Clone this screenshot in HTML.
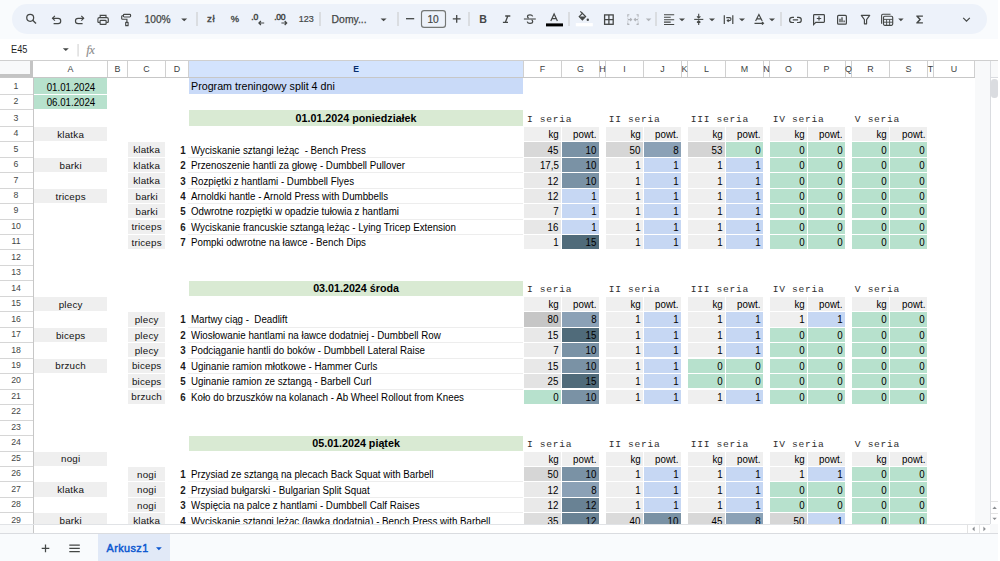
<!DOCTYPE html>
<html><head><meta charset="utf-8"><style>
html,body{margin:0;padding:0;width:1000px;height:561px;overflow:hidden;background:#f9fbfd;font-family:"Liberation Sans",sans-serif}
#root{position:relative;width:1000px;height:561px;overflow:hidden}
#root div{position:absolute}
.ab{position:absolute}
svg{position:absolute;overflow:visible}
</style></head><body><div id="root">
<!-- toolbar -->
<div style="left:12px;top:4.2px;width:974.5px;height:29.4px;border-radius:15px;background:#edf2fa"></div>
<svg style="left:0;top:0" width="1000" height="40" viewBox="0 0 1000 40">
<g fill="none" stroke="#444746" stroke-width="1.15" stroke-linecap="butt" stroke-linejoin="miter">
<!-- search -->
<circle cx="30.2" cy="17.8" r="3.45" stroke-width="1.25"/>
<path d="M32.7 20.3 L36 23.6" stroke-width="1.35"/>
<!-- undo -->
<path d="M54.9 15.9 L52.5 18.3 L54.9 20.7"/>
<path d="M52.6 18.3 H58.1 A2.65 2.65 0 0 1 58.1 23.6 H53.6"/>
<!-- redo -->
<path d="M81.3 15.9 L83.7 18.3 L81.3 20.7"/>
<path d="M83.6 18.3 H78.1 A2.65 2.65 0 0 0 78.1 23.6 H82.6"/>
<!-- print -->
<path d="M100.2 17.4 V15.3 H106 V17.4"/>
<path d="M99.9 22.4 H98.6 Q97.9 22.4 97.9 21.7 V19 Q97.9 17.6 99.3 17.6 H106.9 Q108.3 17.6 108.3 19 V21.7 Q108.3 22.4 107.6 22.4 H106.3"/>
<rect x="100.1" y="20.4" width="6" height="3.9" rx="0.6"/>
<!-- paint format -->
<rect x="123.4" y="14.4" width="7.2" height="2.6" rx="0.9"/>
<path d="M123.4 15.7 H122.4 Q121.7 15.7 121.7 16.4 V18.5 Q121.7 19.2 122.4 19.2 H126.9 V22.2"/>
<rect x="125.7" y="22.3" width="2.4" height="3.4" rx="0.3"/>
<!-- separators -->
</g>
<g fill="#c7c7c7">
<rect x="196.5" y="12" width="1" height="14"/>
<rect x="319.5" y="12" width="1" height="14"/>
<rect x="397.5" y="12" width="1" height="14"/>
<rect x="468.5" y="12" width="1" height="14"/>
<rect x="568.5" y="12" width="1" height="14"/>
<rect x="655.5" y="12" width="1" height="14"/>
<rect x="780.5" y="12" width="1" height="14"/>
</g>
<g fill="#444746">
<!-- dropdown triangles -->
<path d="M181.2 18.4 H187.2 L184.2 21.3 Z"/>
<path d="M380.6 18.4 H386.6 L383.6 21.3 Z"/>
<path d="M679 18.4 H685 L682 21.3 Z"/>
<path d="M709 18.4 H715 L712 21.3 Z"/>
<path d="M739 18.4 H745 L742 21.3 Z"/>
<path d="M769 18.4 H775 L772 21.3 Z"/>
<path d="M898.2 18.4 H903.6 L900.9 21.2 Z"/>
<path d="M645.8 18.6 H651.4 L648.6 21.3 Z" fill="#b1b4b9"/>
</g>
<!-- text in toolbar -->
<g font-family="'Liberation Sans', sans-serif" fill="#444746">
<text x="144.6" y="23.2" font-size="10.2" stroke="#444746" stroke-width="0.25">100%</text>
<text x="206.9" y="22" font-size="9.8" stroke="#444746" stroke-width="0.35" letter-spacing="0.6">zł</text>
<text x="230.8" y="21.8" font-size="9.4" stroke="#444746" stroke-width="0.35">%</text>
<text x="251.2" y="19.8" font-size="8.6" stroke="#444746" stroke-width="0.45">.0</text>
<text x="274.2" y="19.8" font-size="8.6" stroke="#444746" stroke-width="0.45" letter-spacing="-0.3">.00</text>
<text x="298.8" y="21.7" font-size="9.0" stroke="#444746" stroke-width="0.2">123</text>
<text x="331.6" y="23.2" font-size="10.4" stroke="#444746" stroke-width="0.25">Domy...</text>
<text x="427.4" y="22.7" font-size="10.2" stroke="#444746" stroke-width="0.2">10</text>
<text x="479.3" y="22.7" font-size="10.6" font-weight="700">B</text>
</g>
<g fill="none" stroke="#444746" stroke-width="1.1">
<!-- decimal arrows -->
<path d="M264.2 23 H258.9 M260.9 21 L258.9 23 L260.9 25" stroke-width="1.2"/>
<path d="M281.4 23 H286.7 M284.7 21 L286.7 23 L284.7 25" stroke-width="1.2"/>
<!-- minus / plus -->
<path d="M406 18.7 H414.2" stroke-width="1.3"/>
<path d="M452.8 18.9 H460.6 M456.7 15 V22.8" stroke-width="1.3"/>
<!-- font size box -->
<rect x="421.5" y="10.6" width="24" height="16.8" rx="2.6" stroke="#747775" stroke-width="1.15"/>
<!-- italic -->
<path d="M505.2 16 H510.3 M502.9 22.3 H508 M507.8 16 L505.4 22.3" stroke-width="1.3"/>
<!-- strikethrough -->
<path d="M523.9 19 H535.8" stroke-width="1.1"/>
<path d="M532.7 16.4 Q532.2 14.8 530 14.8 Q527.5 14.8 527.5 16.6 Q527.5 17.5 528.6 18.3" stroke-width="1.2"/>
<path d="M531.6 19.8 Q532.7 20.5 532.7 21.5 Q532.7 23.4 530 23.4 Q527.6 23.4 527.2 21.6" stroke-width="1.2"/>
<!-- text color A -->
<path d="M550.8 21 L554.1 13.9 L557.4 21 M551.9 18.7 H556.3" stroke-width="1.2"/>
<!-- borders -->
<rect x="604.6" y="14.9" width="8.6" height="9.4" stroke-width="1.3"/>
<path d="M608.9 14.9 V24.3 M604.6 19.6 H613.2" stroke-width="1.3"/>
<!-- merge (disabled) -->
<g stroke="#b1b4b9" stroke-width="1.1">
<path d="M629.4 14.8 H627.8 V16.7 M627.8 22.5 V24.4 H629.4 M636.5 14.8 H638.1 V16.7 M638.1 22.5 V24.4 H636.5"/>
<path d="M627.8 19.6 H631.6 M630.2 18.2 L631.6 19.6 L630.2 21 M638.1 19.6 H634.3 M635.7 18.2 L634.3 19.6 L635.7 21"/>
<path d="M627.8 17.8 V18.4 M627.8 20.8 V21.4 M638.1 17.8 V18.4 M638.1 20.8 V21.4"/>
</g>
<!-- align left -->
<path d="M664 14.8 H674.2 M664 17.3 H670.7 M664 19.7 H674.2 M664 22.1 H670.7 M664 24.5 H674.2" stroke-width="1.05"/>
<!-- vertical align -->
<path d="M694.2 19.4 H703.3" stroke-width="1.1"/>
<path d="M698.7 13.8 V17.8 M697 16.3 L698.7 18 L700.4 16.3" stroke-width="1.1"/>
<path d="M698.7 25 V21 M697 22.5 L698.7 20.8 L700.4 22.5" stroke-width="1.1"/>
<!-- wrap -->
<path d="M724.3 15.2 V23.9 M732.8 15.2 V23.9" stroke-width="1.2"/>
<path d="M726.3 17.6 H729.5 Q731 17.6 731 19.1 Q731 20.6 729.5 20.6 H727.3 M728.6 19.3 L727.2 20.6 L728.6 21.9" stroke-width="1.05"/>
<!-- text rotation A -->
<path d="M755.6 21 L758.9 14.6 L762.2 21 M756.7 18.8 H761.1" stroke-width="1.15"/>
<path d="M754.5 23.3 H763.3 M762 22 L763.5 23.3 L762 24.6" stroke-width="1.15"/>
<!-- link -->
<path d="M794 17.3 H792.4 Q789.6 17.3 789.6 19.9 Q789.6 22.5 792.4 22.5 H794 M797 17.3 H798.6 Q801.3 17.3 801.3 19.9 Q801.3 22.5 798.6 22.5 H797 M792.8 19.9 H798.1" stroke-width="1.2"/>
<!-- comment -->
<path d="M813.6 24.6 V15.4 Q813.6 14.6 814.4 14.6 H823.6 Q824.4 14.6 824.4 15.4 V21.6 Q824.4 22.4 823.6 22.4 H815.8 Z" stroke-width="1.2"/>
<path d="M819 16.3 V20.6 M816.8 18.5 H821.2" stroke-width="1.2"/>
<!-- chart -->
<rect x="837.6" y="15.4" width="8.8" height="8.8" rx="1" stroke-width="1.2"/>
<path d="M840 18.8 V22.3 M842 17.2 V22.3 M844.1 20.4 V22.3" stroke-width="1.3"/>
<!-- filter -->
<path d="M861.3 15.4 H869.7 L866.6 19.6 V23.8 H864.4 V19.6 Z" stroke-width="1.15" stroke-linejoin="round"/>
<!-- filter views -->
<path d="M881.6 23.7 V15.5 Q881.6 14.3 882.8 14.3 H890.5" stroke-width="1.1"/>
<rect x="883.5" y="16.2" width="9.2" height="9.1" rx="1.2" stroke-width="1.15"/>
<path d="M883.5 19.4 H892.7 M883.5 22.2 H892.7 M886.6 19.4 V25.3 M889.6 19.4 V25.3" stroke-width="0.9"/>
<!-- chevron -->
<path d="M963.2 17.8 L966.5 21.1 L969.8 17.8" stroke-width="1.2"/>
</g>
<g fill="#444746">
<!-- sigma -->
<path d="M916.3 15.4 H922.9 V16.8 H918.6 L921.1 19.5 L918.6 22.2 H922.9 V23.6 H916.3 V22.5 L919.1 19.5 L916.3 16.5 Z"/>
<!-- paint bucket -->
<path d="M579.2 16.6 L582.4 13.4 L585.6 16.6 L582.4 19.8 Z" fill="none" stroke="#444746" stroke-width="1.2"/>
<path d="M579.2 16.6 H585.6 L582.4 19.8 Z"/>
<path d="M580.3 11.3 L582.7 13.7" fill="none" stroke="#444746" stroke-width="1.2"/>
<circle cx="587.8" cy="19.7" r="1.2"/>
<!-- text color bar -->
<rect x="546" y="23.4" width="17" height="3" fill="#000"/>
</g>
<rect x="575.8" y="23.1" width="17" height="3.2" fill="#fff"/>
</svg>

<!-- formula bar -->
<div style="left:0;top:39.4px;width:1000px;height:21px;background:#fff"></div>
<div style="left:10.5px;top:42.6px;font:400 10.4px/13px 'Liberation Sans',sans-serif;color:#1f1f1f;transform:scaleX(0.885);transform-origin:left 50%">E45</div>
<svg style="left:0;top:39" width="120" height="21" viewBox="0 39 120 21"><path d="M62.8 48.2 H68.8 L65.8 51.1 Z" fill="#444746"/><rect x="77.6" y="44" width="0.9" height="12.5" fill="#c7c7c7"/>
<text x="86.3" y="54.2" font-family="'Liberation Serif', serif" font-style="italic" font-size="12.6" fill="#8d8d8d" stroke="#8d8d8d" stroke-width="0.15" letter-spacing="-0.5">fx</text></svg>

<!-- grid area -->
<div style="left:0;top:60.2px;width:998px;height:464.2px;background:#fff"></div>
<div style="left:0;top:59.9px;width:998px;height:0.8px;background:#cfcfcf"></div>
<div style="left:33.70px;top:60.60px;width:73.60px;height:16.70px;background:#fff;"></div><div style="left:107.30px;top:60.60px;width:20.20px;height:16.70px;background:#fff;"></div><div style="left:127.50px;top:60.60px;width:38.00px;height:16.70px;background:#fff;"></div><div style="left:165.50px;top:60.60px;width:23.00px;height:16.70px;background:#fff;"></div><div style="left:188.50px;top:60.60px;width:335.10px;height:16.70px;background:#d3e3fd;"></div><div style="left:523.60px;top:60.60px;width:37.80px;height:16.70px;background:#fff;"></div><div style="left:561.40px;top:60.60px;width:38.00px;height:16.70px;background:#fff;"></div><div style="left:599.40px;top:60.60px;width:6.00px;height:16.70px;background:#fff;"></div><div style="left:605.40px;top:60.60px;width:38.00px;height:16.70px;background:#fff;"></div><div style="left:643.40px;top:60.60px;width:38.00px;height:16.70px;background:#fff;"></div><div style="left:681.40px;top:60.60px;width:6.00px;height:16.70px;background:#fff;"></div><div style="left:687.40px;top:60.60px;width:38.00px;height:16.70px;background:#fff;"></div><div style="left:725.40px;top:60.60px;width:38.00px;height:16.70px;background:#fff;"></div><div style="left:763.40px;top:60.60px;width:6.00px;height:16.70px;background:#fff;"></div><div style="left:769.40px;top:60.60px;width:38.00px;height:16.70px;background:#fff;"></div><div style="left:807.40px;top:60.60px;width:38.00px;height:16.70px;background:#fff;"></div><div style="left:845.40px;top:60.60px;width:6.00px;height:16.70px;background:#fff;"></div><div style="left:851.40px;top:60.60px;width:38.00px;height:16.70px;background:#fff;"></div><div style="left:889.40px;top:60.60px;width:38.10px;height:16.70px;background:#fff;"></div><div style="left:927.50px;top:60.60px;width:6.10px;height:16.70px;background:#fff;"></div><div style="left:933.60px;top:60.60px;width:40.60px;height:16.70px;background:#fff;"></div><div style="left:106.90px;top:60.60px;width:0.80px;height:16.70px;background:#d0d0d0;"></div><div style="top:64.03px;font:400 8.90px/11.57px 'Liberation Sans', sans-serif;color:#3c3f42;white-space:pre;left:-129.50px;width:400px;text-align:center;">A</div><div style="left:127.10px;top:60.60px;width:0.80px;height:16.70px;background:#d0d0d0;"></div><div style="top:64.03px;font:400 8.90px/11.57px 'Liberation Sans', sans-serif;color:#3c3f42;white-space:pre;left:-82.60px;width:400px;text-align:center;">B</div><div style="left:165.10px;top:60.60px;width:0.80px;height:16.70px;background:#d0d0d0;"></div><div style="top:64.03px;font:400 8.90px/11.57px 'Liberation Sans', sans-serif;color:#3c3f42;white-space:pre;left:-53.50px;width:400px;text-align:center;">C</div><div style="left:188.10px;top:60.60px;width:0.80px;height:16.70px;background:#d0d0d0;"></div><div style="top:64.03px;font:400 8.90px/11.57px 'Liberation Sans', sans-serif;color:#3c3f42;white-space:pre;left:-23.00px;width:400px;text-align:center;">D</div><div style="left:523.20px;top:60.60px;width:0.80px;height:16.70px;background:#d0d0d0;"></div><div style="top:64.33px;font:700 8.60px/11.18px 'Liberation Sans', sans-serif;color:#062e6f;white-space:pre;left:156.05px;width:400px;text-align:center;">E</div><div style="left:561.00px;top:60.60px;width:0.80px;height:16.70px;background:#d0d0d0;"></div><div style="top:64.03px;font:400 8.90px/11.57px 'Liberation Sans', sans-serif;color:#3c3f42;white-space:pre;left:342.50px;width:400px;text-align:center;">F</div><div style="left:599.00px;top:60.60px;width:0.80px;height:16.70px;background:#d0d0d0;"></div><div style="top:64.03px;font:400 8.90px/11.57px 'Liberation Sans', sans-serif;color:#3c3f42;white-space:pre;left:380.40px;width:400px;text-align:center;">G</div><div style="left:605.00px;top:60.60px;width:0.80px;height:16.70px;background:#d0d0d0;"></div><div style="top:64.03px;font:400 8.90px/11.57px 'Liberation Sans', sans-serif;color:#3c3f42;white-space:pre;left:402.40px;width:400px;text-align:center;">H</div><div style="left:643.00px;top:60.60px;width:0.80px;height:16.70px;background:#d0d0d0;"></div><div style="top:64.03px;font:400 8.90px/11.57px 'Liberation Sans', sans-serif;color:#3c3f42;white-space:pre;left:424.40px;width:400px;text-align:center;">I</div><div style="left:681.00px;top:60.60px;width:0.80px;height:16.70px;background:#d0d0d0;"></div><div style="top:64.03px;font:400 8.90px/11.57px 'Liberation Sans', sans-serif;color:#3c3f42;white-space:pre;left:462.40px;width:400px;text-align:center;">J</div><div style="left:687.00px;top:60.60px;width:0.80px;height:16.70px;background:#d0d0d0;"></div><div style="top:64.03px;font:400 8.90px/11.57px 'Liberation Sans', sans-serif;color:#3c3f42;white-space:pre;left:484.40px;width:400px;text-align:center;">K</div><div style="left:725.00px;top:60.60px;width:0.80px;height:16.70px;background:#d0d0d0;"></div><div style="top:64.03px;font:400 8.90px/11.57px 'Liberation Sans', sans-serif;color:#3c3f42;white-space:pre;left:506.40px;width:400px;text-align:center;">L</div><div style="left:763.00px;top:60.60px;width:0.80px;height:16.70px;background:#d0d0d0;"></div><div style="top:64.03px;font:400 8.90px/11.57px 'Liberation Sans', sans-serif;color:#3c3f42;white-space:pre;left:544.40px;width:400px;text-align:center;">M</div><div style="left:769.00px;top:60.60px;width:0.80px;height:16.70px;background:#d0d0d0;"></div><div style="top:64.03px;font:400 8.90px/11.57px 'Liberation Sans', sans-serif;color:#3c3f42;white-space:pre;left:566.40px;width:400px;text-align:center;">N</div><div style="left:807.00px;top:60.60px;width:0.80px;height:16.70px;background:#d0d0d0;"></div><div style="top:64.03px;font:400 8.90px/11.57px 'Liberation Sans', sans-serif;color:#3c3f42;white-space:pre;left:588.40px;width:400px;text-align:center;">O</div><div style="left:845.00px;top:60.60px;width:0.80px;height:16.70px;background:#d0d0d0;"></div><div style="top:64.03px;font:400 8.90px/11.57px 'Liberation Sans', sans-serif;color:#3c3f42;white-space:pre;left:626.40px;width:400px;text-align:center;">P</div><div style="left:851.00px;top:60.60px;width:0.80px;height:16.70px;background:#d0d0d0;"></div><div style="top:64.03px;font:400 8.90px/11.57px 'Liberation Sans', sans-serif;color:#3c3f42;white-space:pre;left:648.40px;width:400px;text-align:center;">Q</div><div style="left:889.00px;top:60.60px;width:0.80px;height:16.70px;background:#d0d0d0;"></div><div style="top:64.03px;font:400 8.90px/11.57px 'Liberation Sans', sans-serif;color:#3c3f42;white-space:pre;left:670.40px;width:400px;text-align:center;">R</div><div style="left:927.10px;top:60.60px;width:0.80px;height:16.70px;background:#d0d0d0;"></div><div style="top:64.03px;font:400 8.90px/11.57px 'Liberation Sans', sans-serif;color:#3c3f42;white-space:pre;left:708.45px;width:400px;text-align:center;">S</div><div style="left:933.20px;top:60.60px;width:0.80px;height:16.70px;background:#d0d0d0;"></div><div style="top:64.03px;font:400 8.90px/11.57px 'Liberation Sans', sans-serif;color:#3c3f42;white-space:pre;left:730.55px;width:400px;text-align:center;">T</div><div style="left:973.80px;top:60.60px;width:0.80px;height:16.70px;background:#d0d0d0;"></div><div style="top:64.03px;font:400 8.90px/11.57px 'Liberation Sans', sans-serif;color:#3c3f42;white-space:pre;left:753.90px;width:400px;text-align:center;">U</div>
<div style="left:974.6px;top:60.6px;width:15px;height:463.6px;background:#f8f9fa"></div>
<div style="left:989.6px;top:60.6px;width:0.8px;height:464px;background:#dadce0"></div>
<div style="left:990.4px;top:60.6px;width:8px;height:17px;background:#f8f9fa"></div>
<div style="left:0;top:76.9px;width:974.6px;height:0.8px;background:#c7c7c7"></div>
<div style="left:990.4px;top:76.9px;width:8px;height:0.8px;background:#dadce0"></div>
<!-- corner -->
<div style="left:0;top:60.6px;width:30px;height:13.7px;background:#f8f9fa"></div>
<div style="left:30px;top:60.6px;width:3.4px;height:17px;background:#c4c4c4"></div>
<div style="left:0;top:74.3px;width:33.4px;height:3.2px;background:#c4c4c4"></div>
<!-- row headers -->
<div style="left:0;top:77.5px;width:990px;height:446.8px;overflow:hidden">
<div style="left:0;top:-77.5px;width:1000px;height:600px">
<div style="left:0.00px;top:93.90px;width:33.40px;height:0.80px;background:#d6d6d6;"></div><div style="top:79.73px;font:400 9.50px/12.35px 'Liberation Sans', sans-serif;color:#444746;white-space:pre;left:-183.60px;width:400px;text-align:center;transform:scaleX(0.92);transform-origin:center 50%;">1</div><div style="left:0.00px;top:109.30px;width:33.40px;height:0.80px;background:#d6d6d6;"></div><div style="top:95.13px;font:400 9.50px/12.35px 'Liberation Sans', sans-serif;color:#444746;white-space:pre;left:-183.60px;width:400px;text-align:center;transform:scaleX(0.92);transform-origin:center 50%;">2</div><div style="left:0.00px;top:125.90px;width:33.40px;height:0.80px;background:#d6d6d6;"></div><div style="top:111.73px;font:400 9.50px/12.35px 'Liberation Sans', sans-serif;color:#444746;white-space:pre;left:-183.60px;width:400px;text-align:center;transform:scaleX(0.92);transform-origin:center 50%;">3</div><div style="left:0.00px;top:141.32px;width:33.40px;height:0.80px;background:#d6d6d6;"></div><div style="top:127.15px;font:400 9.50px/12.35px 'Liberation Sans', sans-serif;color:#444746;white-space:pre;left:-183.60px;width:400px;text-align:center;transform:scaleX(0.92);transform-origin:center 50%;">4</div><div style="left:0.00px;top:157.00px;width:33.40px;height:0.80px;background:#d6d6d6;"></div><div style="top:142.83px;font:400 9.50px/12.35px 'Liberation Sans', sans-serif;color:#444746;white-space:pre;left:-183.60px;width:400px;text-align:center;transform:scaleX(0.92);transform-origin:center 50%;">5</div><div style="left:0.00px;top:172.42px;width:33.40px;height:0.80px;background:#d6d6d6;"></div><div style="top:158.26px;font:400 9.50px/12.35px 'Liberation Sans', sans-serif;color:#444746;white-space:pre;left:-183.60px;width:400px;text-align:center;transform:scaleX(0.92);transform-origin:center 50%;">6</div><div style="left:0.00px;top:187.85px;width:33.40px;height:0.80px;background:#d6d6d6;"></div><div style="top:173.68px;font:400 9.50px/12.35px 'Liberation Sans', sans-serif;color:#444746;white-space:pre;left:-183.60px;width:400px;text-align:center;transform:scaleX(0.92);transform-origin:center 50%;">7</div><div style="left:0.00px;top:203.22px;width:33.40px;height:0.80px;background:#d6d6d6;"></div><div style="top:189.06px;font:400 9.50px/12.35px 'Liberation Sans', sans-serif;color:#444746;white-space:pre;left:-183.60px;width:400px;text-align:center;transform:scaleX(0.92);transform-origin:center 50%;">8</div><div style="left:0.00px;top:218.50px;width:33.40px;height:0.80px;background:#d6d6d6;"></div><div style="top:204.33px;font:400 9.50px/12.35px 'Liberation Sans', sans-serif;color:#444746;white-space:pre;left:-183.60px;width:400px;text-align:center;transform:scaleX(0.92);transform-origin:center 50%;">9</div><div style="left:0.00px;top:233.88px;width:33.40px;height:0.80px;background:#d6d6d6;"></div><div style="top:219.71px;font:400 9.50px/12.35px 'Liberation Sans', sans-serif;color:#444746;white-space:pre;left:-183.60px;width:400px;text-align:center;transform:scaleX(0.92);transform-origin:center 50%;">10</div><div style="left:0.00px;top:249.35px;width:33.40px;height:0.80px;background:#d6d6d6;"></div><div style="top:235.19px;font:400 9.50px/12.35px 'Liberation Sans', sans-serif;color:#444746;white-space:pre;left:-183.60px;width:400px;text-align:center;transform:scaleX(0.92);transform-origin:center 50%;">11</div><div style="left:0.00px;top:264.83px;width:33.40px;height:0.80px;background:#d6d6d6;"></div><div style="top:250.66px;font:400 9.50px/12.35px 'Liberation Sans', sans-serif;color:#444746;white-space:pre;left:-183.60px;width:400px;text-align:center;transform:scaleX(0.92);transform-origin:center 50%;">12</div><div style="left:0.00px;top:280.30px;width:33.40px;height:0.80px;background:#d6d6d6;"></div><div style="top:266.14px;font:400 9.50px/12.35px 'Liberation Sans', sans-serif;color:#444746;white-space:pre;left:-183.60px;width:400px;text-align:center;transform:scaleX(0.92);transform-origin:center 50%;">13</div><div style="left:0.00px;top:295.78px;width:33.40px;height:0.80px;background:#d6d6d6;"></div><div style="top:281.61px;font:400 9.50px/12.35px 'Liberation Sans', sans-serif;color:#444746;white-space:pre;left:-183.60px;width:400px;text-align:center;transform:scaleX(0.92);transform-origin:center 50%;">14</div><div style="left:0.00px;top:311.26px;width:33.40px;height:0.80px;background:#d6d6d6;"></div><div style="top:297.09px;font:400 9.50px/12.35px 'Liberation Sans', sans-serif;color:#444746;white-space:pre;left:-183.60px;width:400px;text-align:center;transform:scaleX(0.92);transform-origin:center 50%;">15</div><div style="left:0.00px;top:326.73px;width:33.40px;height:0.80px;background:#d6d6d6;"></div><div style="top:312.57px;font:400 9.50px/12.35px 'Liberation Sans', sans-serif;color:#444746;white-space:pre;left:-183.60px;width:400px;text-align:center;transform:scaleX(0.92);transform-origin:center 50%;">16</div><div style="left:0.00px;top:342.21px;width:33.40px;height:0.80px;background:#d6d6d6;"></div><div style="top:328.04px;font:400 9.50px/12.35px 'Liberation Sans', sans-serif;color:#444746;white-space:pre;left:-183.60px;width:400px;text-align:center;transform:scaleX(0.92);transform-origin:center 50%;">17</div><div style="left:0.00px;top:357.68px;width:33.40px;height:0.80px;background:#d6d6d6;"></div><div style="top:343.52px;font:400 9.50px/12.35px 'Liberation Sans', sans-serif;color:#444746;white-space:pre;left:-183.60px;width:400px;text-align:center;transform:scaleX(0.92);transform-origin:center 50%;">18</div><div style="left:0.00px;top:373.16px;width:33.40px;height:0.80px;background:#d6d6d6;"></div><div style="top:358.99px;font:400 9.50px/12.35px 'Liberation Sans', sans-serif;color:#444746;white-space:pre;left:-183.60px;width:400px;text-align:center;transform:scaleX(0.92);transform-origin:center 50%;">19</div><div style="left:0.00px;top:388.64px;width:33.40px;height:0.80px;background:#d6d6d6;"></div><div style="top:374.47px;font:400 9.50px/12.35px 'Liberation Sans', sans-serif;color:#444746;white-space:pre;left:-183.60px;width:400px;text-align:center;transform:scaleX(0.92);transform-origin:center 50%;">20</div><div style="left:0.00px;top:404.11px;width:33.40px;height:0.80px;background:#d6d6d6;"></div><div style="top:389.95px;font:400 9.50px/12.35px 'Liberation Sans', sans-serif;color:#444746;white-space:pre;left:-183.60px;width:400px;text-align:center;transform:scaleX(0.92);transform-origin:center 50%;">21</div><div style="left:0.00px;top:419.59px;width:33.40px;height:0.80px;background:#d6d6d6;"></div><div style="top:405.42px;font:400 9.50px/12.35px 'Liberation Sans', sans-serif;color:#444746;white-space:pre;left:-183.60px;width:400px;text-align:center;transform:scaleX(0.92);transform-origin:center 50%;">22</div><div style="left:0.00px;top:435.06px;width:33.40px;height:0.80px;background:#d6d6d6;"></div><div style="top:420.90px;font:400 9.50px/12.35px 'Liberation Sans', sans-serif;color:#444746;white-space:pre;left:-183.60px;width:400px;text-align:center;transform:scaleX(0.92);transform-origin:center 50%;">23</div><div style="left:0.00px;top:450.54px;width:33.40px;height:0.80px;background:#d6d6d6;"></div><div style="top:436.37px;font:400 9.50px/12.35px 'Liberation Sans', sans-serif;color:#444746;white-space:pre;left:-183.60px;width:400px;text-align:center;transform:scaleX(0.92);transform-origin:center 50%;">24</div><div style="left:0.00px;top:466.02px;width:33.40px;height:0.80px;background:#d6d6d6;"></div><div style="top:451.85px;font:400 9.50px/12.35px 'Liberation Sans', sans-serif;color:#444746;white-space:pre;left:-183.60px;width:400px;text-align:center;transform:scaleX(0.92);transform-origin:center 50%;">25</div><div style="left:0.00px;top:481.49px;width:33.40px;height:0.80px;background:#d6d6d6;"></div><div style="top:467.33px;font:400 9.50px/12.35px 'Liberation Sans', sans-serif;color:#444746;white-space:pre;left:-183.60px;width:400px;text-align:center;transform:scaleX(0.92);transform-origin:center 50%;">26</div><div style="left:0.00px;top:496.97px;width:33.40px;height:0.80px;background:#d6d6d6;"></div><div style="top:482.80px;font:400 9.50px/12.35px 'Liberation Sans', sans-serif;color:#444746;white-space:pre;left:-183.60px;width:400px;text-align:center;transform:scaleX(0.92);transform-origin:center 50%;">27</div><div style="left:0.00px;top:512.44px;width:33.40px;height:0.80px;background:#d6d6d6;"></div><div style="top:498.28px;font:400 9.50px/12.35px 'Liberation Sans', sans-serif;color:#444746;white-space:pre;left:-183.60px;width:400px;text-align:center;transform:scaleX(0.92);transform-origin:center 50%;">28</div><div style="left:0.00px;top:527.92px;width:33.40px;height:0.80px;background:#d6d6d6;"></div><div style="top:513.75px;font:400 9.50px/12.35px 'Liberation Sans', sans-serif;color:#444746;white-space:pre;left:-183.60px;width:400px;text-align:center;transform:scaleX(0.92);transform-origin:center 50%;">29</div><div style="left:0.00px;top:543.40px;width:33.40px;height:0.80px;background:#d6d6d6;"></div><div style="top:529.23px;font:400 9.50px/12.35px 'Liberation Sans', sans-serif;color:#444746;white-space:pre;left:-183.60px;width:400px;text-align:center;transform:scaleX(0.92);transform-origin:center 50%;">30</div>
<div style="left:33px;top:77.5px;width:0.8px;height:470px;background:#c7c7c7"></div>
<div style="left:34.20px;top:78.10px;width:72.60px;height:15.60px;background:#b7e1cd;"></div><div style="top:80.68px;font:400 10.16px/13.20px 'Liberation Sans', sans-serif;color:#000;white-space:pre;left:-129.50px;width:400px;text-align:center;transform:scaleX(0.955);transform-origin:center 50%;">01.01.2024</div><div style="left:34.20px;top:94.90px;width:72.60px;height:14.20px;background:#b7e1cd;"></div><div style="top:96.08px;font:400 10.16px/13.20px 'Liberation Sans', sans-serif;color:#000;white-space:pre;left:-129.50px;width:400px;text-align:center;transform:scaleX(0.955);transform-origin:center 50%;">06.01.2024</div><div style="left:189.00px;top:78.10px;width:334.10px;height:15.60px;background:#c9daf8;"></div><div style="top:79.94px;font:400 10.70px/13.91px 'Liberation Sans', sans-serif;color:#000;white-space:pre;left:191.00px;">Program treningowy split 4 dni</div><div style="left:188.80px;top:109.80px;width:334.50px;height:16.40px;background:#d9ead3;"></div><div style="top:112.22px;font:700 10.72px/13.94px 'Liberation Sans', sans-serif;color:#000;white-space:pre;left:156.05px;width:400px;text-align:center;">01.01.2024 poniedziałek</div><div style="top:114.21px;font:400 9.60px/12.48px 'Liberation Mono', monospace;color:#303030;white-space:pre;left:526.90px;letter-spacing:0.72px;">I seria</div><div style="top:114.21px;font:400 9.60px/12.48px 'Liberation Mono', monospace;color:#303030;white-space:pre;left:608.70px;letter-spacing:0.72px;">II seria</div><div style="top:114.21px;font:400 9.60px/12.48px 'Liberation Mono', monospace;color:#303030;white-space:pre;left:690.70px;letter-spacing:0.72px;">III seria</div><div style="top:114.21px;font:400 9.60px/12.48px 'Liberation Mono', monospace;color:#303030;white-space:pre;left:772.70px;letter-spacing:0.72px;">IV seria</div><div style="top:114.21px;font:400 9.60px/12.48px 'Liberation Mono', monospace;color:#303030;white-space:pre;left:854.70px;letter-spacing:0.72px;">V seria</div><div style="left:524.10px;top:126.90px;width:36.80px;height:14.22px;background:#efefef;"></div><div style="left:561.90px;top:126.90px;width:37.00px;height:14.22px;background:#efefef;"></div><div style="top:128.05px;font:400 10.21px/13.27px 'Liberation Sans', sans-serif;color:#000;white-space:pre;right:441.20px;text-align:right;transform:scaleX(0.955);transform-origin:right 50%;">kg</div><div style="top:128.05px;font:400 10.21px/13.27px 'Liberation Sans', sans-serif;color:#000;white-space:pre;right:403.20px;text-align:right;transform:scaleX(0.955);transform-origin:right 50%;">powt.</div><div style="left:605.90px;top:126.90px;width:37.00px;height:14.22px;background:#efefef;"></div><div style="left:643.90px;top:126.90px;width:37.00px;height:14.22px;background:#efefef;"></div><div style="top:128.05px;font:400 10.21px/13.27px 'Liberation Sans', sans-serif;color:#000;white-space:pre;right:359.20px;text-align:right;transform:scaleX(0.955);transform-origin:right 50%;">kg</div><div style="top:128.05px;font:400 10.21px/13.27px 'Liberation Sans', sans-serif;color:#000;white-space:pre;right:321.20px;text-align:right;transform:scaleX(0.955);transform-origin:right 50%;">powt.</div><div style="left:687.90px;top:126.90px;width:37.00px;height:14.22px;background:#efefef;"></div><div style="left:725.90px;top:126.90px;width:37.00px;height:14.22px;background:#efefef;"></div><div style="top:128.05px;font:400 10.21px/13.27px 'Liberation Sans', sans-serif;color:#000;white-space:pre;right:277.20px;text-align:right;transform:scaleX(0.955);transform-origin:right 50%;">kg</div><div style="top:128.05px;font:400 10.21px/13.27px 'Liberation Sans', sans-serif;color:#000;white-space:pre;right:239.20px;text-align:right;transform:scaleX(0.955);transform-origin:right 50%;">powt.</div><div style="left:769.90px;top:126.90px;width:37.00px;height:14.22px;background:#efefef;"></div><div style="left:807.90px;top:126.90px;width:37.00px;height:14.22px;background:#efefef;"></div><div style="top:128.05px;font:400 10.21px/13.27px 'Liberation Sans', sans-serif;color:#000;white-space:pre;right:195.20px;text-align:right;transform:scaleX(0.955);transform-origin:right 50%;">kg</div><div style="top:128.05px;font:400 10.21px/13.27px 'Liberation Sans', sans-serif;color:#000;white-space:pre;right:157.20px;text-align:right;transform:scaleX(0.955);transform-origin:right 50%;">powt.</div><div style="left:851.90px;top:126.90px;width:37.00px;height:14.22px;background:#efefef;"></div><div style="left:889.90px;top:126.90px;width:37.10px;height:14.22px;background:#efefef;"></div><div style="top:128.05px;font:400 10.21px/13.27px 'Liberation Sans', sans-serif;color:#000;white-space:pre;right:113.20px;text-align:right;transform:scaleX(0.955);transform-origin:right 50%;">kg</div><div style="top:128.05px;font:400 10.21px/13.27px 'Liberation Sans', sans-serif;color:#000;white-space:pre;right:75.10px;text-align:right;transform:scaleX(0.955);transform-origin:right 50%;">powt.</div><div style="left:34.20px;top:126.90px;width:72.60px;height:14.22px;background:#efefef;"></div><div style="top:128.65px;font:400 9.80px/12.74px 'Liberation Sans', sans-serif;color:#000;white-space:pre;left:-129.35px;width:400px;text-align:center;letter-spacing:0.2px;color:#111;">klatka</div><div style="left:34.20px;top:158.00px;width:72.60px;height:14.23px;background:#efefef;"></div><div style="top:159.76px;font:400 9.80px/12.74px 'Liberation Sans', sans-serif;color:#000;white-space:pre;left:-129.35px;width:400px;text-align:center;letter-spacing:0.2px;color:#111;">barki</div><div style="left:34.20px;top:188.85px;width:72.60px;height:14.18px;background:#efefef;"></div><div style="top:190.56px;font:400 9.80px/12.74px 'Liberation Sans', sans-serif;color:#000;white-space:pre;left:-129.35px;width:400px;text-align:center;letter-spacing:0.2px;color:#111;">triceps</div><div style="left:128.00px;top:142.32px;width:37.00px;height:14.48px;background:#efefef;"></div><div style="top:144.33px;font:400 9.80px/12.74px 'Liberation Sans', sans-serif;color:#000;white-space:pre;left:-53.35px;width:400px;text-align:center;letter-spacing:0.2px;color:#111;">klatka</div><div style="top:143.72px;font:700 10.21px/13.27px 'Liberation Sans', sans-serif;color:#1a1a1a;white-space:pre;right:814.50px;text-align:right;transform:scaleX(0.955);transform-origin:right 50%;">1</div><div style="left:188.00px;top:157.00px;width:335.10px;height:0.80px;background:#ededed;"></div><div style="top:143.72px;font:400 10.21px/13.27px 'Liberation Sans', sans-serif;color:#000;white-space:pre;left:190.90px;transform:scaleX(0.955);transform-origin:left 50%;">Wyciskanie sztangi leżąc  - Bench Press</div><div style="left:524.10px;top:142.32px;width:36.80px;height:14.48px;background:rgb(216,216,216);"></div><div style="left:561.90px;top:142.32px;width:37.00px;height:14.48px;background:rgb(122,146,165);"></div><div style="top:143.72px;font:400 10.21px/13.27px 'Liberation Sans', sans-serif;color:#000;white-space:pre;right:441.20px;text-align:right;transform:scaleX(0.955);transform-origin:right 50%;">45</div><div style="top:143.72px;font:400 10.21px/13.27px 'Liberation Sans', sans-serif;color:#000;white-space:pre;right:403.20px;text-align:right;transform:scaleX(0.955);transform-origin:right 50%;">10</div><div style="left:605.90px;top:142.32px;width:37.00px;height:14.48px;background:rgb(214,214,214);"></div><div style="left:643.90px;top:142.32px;width:37.00px;height:14.48px;background:rgb(139,161,182);"></div><div style="top:143.72px;font:400 10.21px/13.27px 'Liberation Sans', sans-serif;color:#000;white-space:pre;right:359.20px;text-align:right;transform:scaleX(0.955);transform-origin:right 50%;">50</div><div style="top:143.72px;font:400 10.21px/13.27px 'Liberation Sans', sans-serif;color:#000;white-space:pre;right:321.20px;text-align:right;transform:scaleX(0.955);transform-origin:right 50%;">8</div><div style="left:687.90px;top:142.32px;width:37.00px;height:14.48px;background:rgb(212,212,212);"></div><div style="left:725.90px;top:142.32px;width:37.00px;height:14.48px;background:#b7e1cd;"></div><div style="top:143.72px;font:400 10.21px/13.27px 'Liberation Sans', sans-serif;color:#000;white-space:pre;right:277.20px;text-align:right;transform:scaleX(0.955);transform-origin:right 50%;">53</div><div style="top:143.72px;font:400 10.21px/13.27px 'Liberation Sans', sans-serif;color:#000;white-space:pre;right:239.20px;text-align:right;transform:scaleX(0.955);transform-origin:right 50%;">0</div><div style="left:769.90px;top:142.32px;width:37.00px;height:14.48px;background:#b7e1cd;"></div><div style="left:807.90px;top:142.32px;width:37.00px;height:14.48px;background:#b7e1cd;"></div><div style="top:143.72px;font:400 10.21px/13.27px 'Liberation Sans', sans-serif;color:#000;white-space:pre;right:195.20px;text-align:right;transform:scaleX(0.955);transform-origin:right 50%;">0</div><div style="top:143.72px;font:400 10.21px/13.27px 'Liberation Sans', sans-serif;color:#000;white-space:pre;right:157.20px;text-align:right;transform:scaleX(0.955);transform-origin:right 50%;">0</div><div style="left:851.90px;top:142.32px;width:37.00px;height:14.48px;background:#b7e1cd;"></div><div style="left:889.90px;top:142.32px;width:37.10px;height:14.48px;background:#b7e1cd;"></div><div style="top:143.72px;font:400 10.21px/13.27px 'Liberation Sans', sans-serif;color:#000;white-space:pre;right:113.20px;text-align:right;transform:scaleX(0.955);transform-origin:right 50%;">0</div><div style="top:143.72px;font:400 10.21px/13.27px 'Liberation Sans', sans-serif;color:#000;white-space:pre;right:75.10px;text-align:right;transform:scaleX(0.955);transform-origin:right 50%;">0</div><div style="left:128.00px;top:158.00px;width:37.00px;height:14.23px;background:#efefef;"></div><div style="top:159.76px;font:400 9.80px/12.74px 'Liberation Sans', sans-serif;color:#000;white-space:pre;left:-53.35px;width:400px;text-align:center;letter-spacing:0.2px;color:#111;">klatka</div><div style="top:159.15px;font:700 10.21px/13.27px 'Liberation Sans', sans-serif;color:#1a1a1a;white-space:pre;right:814.50px;text-align:right;transform:scaleX(0.955);transform-origin:right 50%;">2</div><div style="left:188.00px;top:172.42px;width:335.10px;height:0.80px;background:#ededed;"></div><div style="top:159.15px;font:400 10.21px/13.27px 'Liberation Sans', sans-serif;color:#000;white-space:pre;left:190.90px;transform:scaleX(0.955);transform-origin:left 50%;">Przenoszenie hantli za głowę - Dumbbell Pullover</div><div style="left:524.10px;top:158.00px;width:36.80px;height:14.23px;background:rgb(230,230,230);"></div><div style="left:561.90px;top:158.00px;width:37.00px;height:14.23px;background:rgb(122,146,165);"></div><div style="top:159.15px;font:400 10.21px/13.27px 'Liberation Sans', sans-serif;color:#000;white-space:pre;right:441.20px;text-align:right;transform:scaleX(0.955);transform-origin:right 50%;">17,5</div><div style="top:159.15px;font:400 10.21px/13.27px 'Liberation Sans', sans-serif;color:#000;white-space:pre;right:403.20px;text-align:right;transform:scaleX(0.955);transform-origin:right 50%;">10</div><div style="left:605.90px;top:158.00px;width:37.00px;height:14.23px;background:rgb(239,239,239);"></div><div style="left:643.90px;top:158.00px;width:37.00px;height:14.23px;background:rgb(198,215,243);"></div><div style="top:159.15px;font:400 10.21px/13.27px 'Liberation Sans', sans-serif;color:#000;white-space:pre;right:359.20px;text-align:right;transform:scaleX(0.955);transform-origin:right 50%;">1</div><div style="top:159.15px;font:400 10.21px/13.27px 'Liberation Sans', sans-serif;color:#000;white-space:pre;right:321.20px;text-align:right;transform:scaleX(0.955);transform-origin:right 50%;">1</div><div style="left:687.90px;top:158.00px;width:37.00px;height:14.23px;background:rgb(239,239,239);"></div><div style="left:725.90px;top:158.00px;width:37.00px;height:14.23px;background:rgb(198,215,243);"></div><div style="top:159.15px;font:400 10.21px/13.27px 'Liberation Sans', sans-serif;color:#000;white-space:pre;right:277.20px;text-align:right;transform:scaleX(0.955);transform-origin:right 50%;">1</div><div style="top:159.15px;font:400 10.21px/13.27px 'Liberation Sans', sans-serif;color:#000;white-space:pre;right:239.20px;text-align:right;transform:scaleX(0.955);transform-origin:right 50%;">1</div><div style="left:769.90px;top:158.00px;width:37.00px;height:14.23px;background:#b7e1cd;"></div><div style="left:807.90px;top:158.00px;width:37.00px;height:14.23px;background:#b7e1cd;"></div><div style="top:159.15px;font:400 10.21px/13.27px 'Liberation Sans', sans-serif;color:#000;white-space:pre;right:195.20px;text-align:right;transform:scaleX(0.955);transform-origin:right 50%;">0</div><div style="top:159.15px;font:400 10.21px/13.27px 'Liberation Sans', sans-serif;color:#000;white-space:pre;right:157.20px;text-align:right;transform:scaleX(0.955);transform-origin:right 50%;">0</div><div style="left:851.90px;top:158.00px;width:37.00px;height:14.23px;background:#b7e1cd;"></div><div style="left:889.90px;top:158.00px;width:37.10px;height:14.23px;background:#b7e1cd;"></div><div style="top:159.15px;font:400 10.21px/13.27px 'Liberation Sans', sans-serif;color:#000;white-space:pre;right:113.20px;text-align:right;transform:scaleX(0.955);transform-origin:right 50%;">0</div><div style="top:159.15px;font:400 10.21px/13.27px 'Liberation Sans', sans-serif;color:#000;white-space:pre;right:75.10px;text-align:right;transform:scaleX(0.955);transform-origin:right 50%;">0</div><div style="left:128.00px;top:173.42px;width:37.00px;height:14.23px;background:#efefef;"></div><div style="top:175.18px;font:400 9.80px/12.74px 'Liberation Sans', sans-serif;color:#000;white-space:pre;left:-53.35px;width:400px;text-align:center;letter-spacing:0.2px;color:#111;">klatka</div><div style="top:174.57px;font:700 10.21px/13.27px 'Liberation Sans', sans-serif;color:#1a1a1a;white-space:pre;right:814.50px;text-align:right;transform:scaleX(0.955);transform-origin:right 50%;">3</div><div style="left:188.00px;top:187.85px;width:335.10px;height:0.80px;background:#ededed;"></div><div style="top:174.57px;font:400 10.21px/13.27px 'Liberation Sans', sans-serif;color:#000;white-space:pre;left:190.90px;transform:scaleX(0.955);transform-origin:left 50%;">Rozpiętki z hantlami - Dumbbell Flyes</div><div style="left:524.10px;top:173.42px;width:36.80px;height:14.23px;background:rgb(233,233,233);"></div><div style="left:561.90px;top:173.42px;width:37.00px;height:14.23px;background:rgb(122,146,165);"></div><div style="top:174.57px;font:400 10.21px/13.27px 'Liberation Sans', sans-serif;color:#000;white-space:pre;right:441.20px;text-align:right;transform:scaleX(0.955);transform-origin:right 50%;">12</div><div style="top:174.57px;font:400 10.21px/13.27px 'Liberation Sans', sans-serif;color:#000;white-space:pre;right:403.20px;text-align:right;transform:scaleX(0.955);transform-origin:right 50%;">10</div><div style="left:605.90px;top:173.42px;width:37.00px;height:14.23px;background:rgb(239,239,239);"></div><div style="left:643.90px;top:173.42px;width:37.00px;height:14.23px;background:rgb(198,215,243);"></div><div style="top:174.57px;font:400 10.21px/13.27px 'Liberation Sans', sans-serif;color:#000;white-space:pre;right:359.20px;text-align:right;transform:scaleX(0.955);transform-origin:right 50%;">1</div><div style="top:174.57px;font:400 10.21px/13.27px 'Liberation Sans', sans-serif;color:#000;white-space:pre;right:321.20px;text-align:right;transform:scaleX(0.955);transform-origin:right 50%;">1</div><div style="left:687.90px;top:173.42px;width:37.00px;height:14.23px;background:rgb(239,239,239);"></div><div style="left:725.90px;top:173.42px;width:37.00px;height:14.23px;background:rgb(198,215,243);"></div><div style="top:174.57px;font:400 10.21px/13.27px 'Liberation Sans', sans-serif;color:#000;white-space:pre;right:277.20px;text-align:right;transform:scaleX(0.955);transform-origin:right 50%;">1</div><div style="top:174.57px;font:400 10.21px/13.27px 'Liberation Sans', sans-serif;color:#000;white-space:pre;right:239.20px;text-align:right;transform:scaleX(0.955);transform-origin:right 50%;">1</div><div style="left:769.90px;top:173.42px;width:37.00px;height:14.23px;background:#b7e1cd;"></div><div style="left:807.90px;top:173.42px;width:37.00px;height:14.23px;background:#b7e1cd;"></div><div style="top:174.57px;font:400 10.21px/13.27px 'Liberation Sans', sans-serif;color:#000;white-space:pre;right:195.20px;text-align:right;transform:scaleX(0.955);transform-origin:right 50%;">0</div><div style="top:174.57px;font:400 10.21px/13.27px 'Liberation Sans', sans-serif;color:#000;white-space:pre;right:157.20px;text-align:right;transform:scaleX(0.955);transform-origin:right 50%;">0</div><div style="left:851.90px;top:173.42px;width:37.00px;height:14.23px;background:#b7e1cd;"></div><div style="left:889.90px;top:173.42px;width:37.10px;height:14.23px;background:#b7e1cd;"></div><div style="top:174.57px;font:400 10.21px/13.27px 'Liberation Sans', sans-serif;color:#000;white-space:pre;right:113.20px;text-align:right;transform:scaleX(0.955);transform-origin:right 50%;">0</div><div style="top:174.57px;font:400 10.21px/13.27px 'Liberation Sans', sans-serif;color:#000;white-space:pre;right:75.10px;text-align:right;transform:scaleX(0.955);transform-origin:right 50%;">0</div><div style="left:128.00px;top:188.85px;width:37.00px;height:14.18px;background:#efefef;"></div><div style="top:190.56px;font:400 9.80px/12.74px 'Liberation Sans', sans-serif;color:#000;white-space:pre;left:-53.35px;width:400px;text-align:center;letter-spacing:0.2px;color:#111;">barki</div><div style="top:189.95px;font:700 10.21px/13.27px 'Liberation Sans', sans-serif;color:#1a1a1a;white-space:pre;right:814.50px;text-align:right;transform:scaleX(0.955);transform-origin:right 50%;">4</div><div style="left:188.00px;top:203.22px;width:335.10px;height:0.80px;background:#ededed;"></div><div style="top:189.95px;font:400 10.21px/13.27px 'Liberation Sans', sans-serif;color:#000;white-space:pre;left:190.90px;transform:scaleX(0.955);transform-origin:left 50%;">Arnoldki hantle - Arnold Press with Dumbbells</div><div style="left:524.10px;top:188.85px;width:36.80px;height:14.18px;background:rgb(233,233,233);"></div><div style="left:561.90px;top:188.85px;width:37.00px;height:14.18px;background:rgb(198,215,243);"></div><div style="top:189.95px;font:400 10.21px/13.27px 'Liberation Sans', sans-serif;color:#000;white-space:pre;right:441.20px;text-align:right;transform:scaleX(0.955);transform-origin:right 50%;">12</div><div style="top:189.95px;font:400 10.21px/13.27px 'Liberation Sans', sans-serif;color:#000;white-space:pre;right:403.20px;text-align:right;transform:scaleX(0.955);transform-origin:right 50%;">1</div><div style="left:605.90px;top:188.85px;width:37.00px;height:14.18px;background:rgb(239,239,239);"></div><div style="left:643.90px;top:188.85px;width:37.00px;height:14.18px;background:rgb(198,215,243);"></div><div style="top:189.95px;font:400 10.21px/13.27px 'Liberation Sans', sans-serif;color:#000;white-space:pre;right:359.20px;text-align:right;transform:scaleX(0.955);transform-origin:right 50%;">1</div><div style="top:189.95px;font:400 10.21px/13.27px 'Liberation Sans', sans-serif;color:#000;white-space:pre;right:321.20px;text-align:right;transform:scaleX(0.955);transform-origin:right 50%;">1</div><div style="left:687.90px;top:188.85px;width:37.00px;height:14.18px;background:rgb(239,239,239);"></div><div style="left:725.90px;top:188.85px;width:37.00px;height:14.18px;background:rgb(198,215,243);"></div><div style="top:189.95px;font:400 10.21px/13.27px 'Liberation Sans', sans-serif;color:#000;white-space:pre;right:277.20px;text-align:right;transform:scaleX(0.955);transform-origin:right 50%;">1</div><div style="top:189.95px;font:400 10.21px/13.27px 'Liberation Sans', sans-serif;color:#000;white-space:pre;right:239.20px;text-align:right;transform:scaleX(0.955);transform-origin:right 50%;">1</div><div style="left:769.90px;top:188.85px;width:37.00px;height:14.18px;background:#b7e1cd;"></div><div style="left:807.90px;top:188.85px;width:37.00px;height:14.18px;background:#b7e1cd;"></div><div style="top:189.95px;font:400 10.21px/13.27px 'Liberation Sans', sans-serif;color:#000;white-space:pre;right:195.20px;text-align:right;transform:scaleX(0.955);transform-origin:right 50%;">0</div><div style="top:189.95px;font:400 10.21px/13.27px 'Liberation Sans', sans-serif;color:#000;white-space:pre;right:157.20px;text-align:right;transform:scaleX(0.955);transform-origin:right 50%;">0</div><div style="left:851.90px;top:188.85px;width:37.00px;height:14.18px;background:#b7e1cd;"></div><div style="left:889.90px;top:188.85px;width:37.10px;height:14.18px;background:#b7e1cd;"></div><div style="top:189.95px;font:400 10.21px/13.27px 'Liberation Sans', sans-serif;color:#000;white-space:pre;right:113.20px;text-align:right;transform:scaleX(0.955);transform-origin:right 50%;">0</div><div style="top:189.95px;font:400 10.21px/13.27px 'Liberation Sans', sans-serif;color:#000;white-space:pre;right:75.10px;text-align:right;transform:scaleX(0.955);transform-origin:right 50%;">0</div><div style="left:128.00px;top:204.22px;width:37.00px;height:14.08px;background:#efefef;"></div><div style="top:205.83px;font:400 9.80px/12.74px 'Liberation Sans', sans-serif;color:#000;white-space:pre;left:-53.35px;width:400px;text-align:center;letter-spacing:0.2px;color:#111;">barki</div><div style="top:205.23px;font:700 10.21px/13.27px 'Liberation Sans', sans-serif;color:#1a1a1a;white-space:pre;right:814.50px;text-align:right;transform:scaleX(0.955);transform-origin:right 50%;">5</div><div style="left:188.00px;top:218.50px;width:335.10px;height:0.80px;background:#ededed;"></div><div style="top:205.23px;font:400 10.21px/13.27px 'Liberation Sans', sans-serif;color:#000;white-space:pre;left:190.90px;transform:scaleX(0.955);transform-origin:left 50%;">Odwrotne rozpiętki w opadzie tułowia z hantlami</div><div style="left:524.10px;top:204.22px;width:36.80px;height:14.08px;background:rgb(236,236,236);"></div><div style="left:561.90px;top:204.22px;width:37.00px;height:14.08px;background:rgb(198,215,243);"></div><div style="top:205.23px;font:400 10.21px/13.27px 'Liberation Sans', sans-serif;color:#000;white-space:pre;right:441.20px;text-align:right;transform:scaleX(0.955);transform-origin:right 50%;">7</div><div style="top:205.23px;font:400 10.21px/13.27px 'Liberation Sans', sans-serif;color:#000;white-space:pre;right:403.20px;text-align:right;transform:scaleX(0.955);transform-origin:right 50%;">1</div><div style="left:605.90px;top:204.22px;width:37.00px;height:14.08px;background:rgb(239,239,239);"></div><div style="left:643.90px;top:204.22px;width:37.00px;height:14.08px;background:rgb(198,215,243);"></div><div style="top:205.23px;font:400 10.21px/13.27px 'Liberation Sans', sans-serif;color:#000;white-space:pre;right:359.20px;text-align:right;transform:scaleX(0.955);transform-origin:right 50%;">1</div><div style="top:205.23px;font:400 10.21px/13.27px 'Liberation Sans', sans-serif;color:#000;white-space:pre;right:321.20px;text-align:right;transform:scaleX(0.955);transform-origin:right 50%;">1</div><div style="left:687.90px;top:204.22px;width:37.00px;height:14.08px;background:rgb(239,239,239);"></div><div style="left:725.90px;top:204.22px;width:37.00px;height:14.08px;background:rgb(198,215,243);"></div><div style="top:205.23px;font:400 10.21px/13.27px 'Liberation Sans', sans-serif;color:#000;white-space:pre;right:277.20px;text-align:right;transform:scaleX(0.955);transform-origin:right 50%;">1</div><div style="top:205.23px;font:400 10.21px/13.27px 'Liberation Sans', sans-serif;color:#000;white-space:pre;right:239.20px;text-align:right;transform:scaleX(0.955);transform-origin:right 50%;">1</div><div style="left:769.90px;top:204.22px;width:37.00px;height:14.08px;background:#b7e1cd;"></div><div style="left:807.90px;top:204.22px;width:37.00px;height:14.08px;background:#b7e1cd;"></div><div style="top:205.23px;font:400 10.21px/13.27px 'Liberation Sans', sans-serif;color:#000;white-space:pre;right:195.20px;text-align:right;transform:scaleX(0.955);transform-origin:right 50%;">0</div><div style="top:205.23px;font:400 10.21px/13.27px 'Liberation Sans', sans-serif;color:#000;white-space:pre;right:157.20px;text-align:right;transform:scaleX(0.955);transform-origin:right 50%;">0</div><div style="left:851.90px;top:204.22px;width:37.00px;height:14.08px;background:#b7e1cd;"></div><div style="left:889.90px;top:204.22px;width:37.10px;height:14.08px;background:#b7e1cd;"></div><div style="top:205.23px;font:400 10.21px/13.27px 'Liberation Sans', sans-serif;color:#000;white-space:pre;right:113.20px;text-align:right;transform:scaleX(0.955);transform-origin:right 50%;">0</div><div style="top:205.23px;font:400 10.21px/13.27px 'Liberation Sans', sans-serif;color:#000;white-space:pre;right:75.10px;text-align:right;transform:scaleX(0.955);transform-origin:right 50%;">0</div><div style="left:128.00px;top:219.50px;width:37.00px;height:14.18px;background:#efefef;"></div><div style="top:221.21px;font:400 9.80px/12.74px 'Liberation Sans', sans-serif;color:#000;white-space:pre;left:-53.35px;width:400px;text-align:center;letter-spacing:0.2px;color:#111;">triceps</div><div style="top:220.60px;font:700 10.21px/13.27px 'Liberation Sans', sans-serif;color:#1a1a1a;white-space:pre;right:814.50px;text-align:right;transform:scaleX(0.955);transform-origin:right 50%;">6</div><div style="left:188.00px;top:233.88px;width:335.10px;height:0.80px;background:#ededed;"></div><div style="top:220.60px;font:400 10.21px/13.27px 'Liberation Sans', sans-serif;color:#000;white-space:pre;left:190.90px;transform:scaleX(0.955);transform-origin:left 50%;">Wyciskanie francuskie sztangą leżąc - Lying Tricep Extension</div><div style="left:524.10px;top:219.50px;width:36.80px;height:14.18px;background:rgb(231,231,231);"></div><div style="left:561.90px;top:219.50px;width:37.00px;height:14.18px;background:rgb(198,215,243);"></div><div style="top:220.60px;font:400 10.21px/13.27px 'Liberation Sans', sans-serif;color:#000;white-space:pre;right:441.20px;text-align:right;transform:scaleX(0.955);transform-origin:right 50%;">16</div><div style="top:220.60px;font:400 10.21px/13.27px 'Liberation Sans', sans-serif;color:#000;white-space:pre;right:403.20px;text-align:right;transform:scaleX(0.955);transform-origin:right 50%;">1</div><div style="left:605.90px;top:219.50px;width:37.00px;height:14.18px;background:rgb(239,239,239);"></div><div style="left:643.90px;top:219.50px;width:37.00px;height:14.18px;background:rgb(198,215,243);"></div><div style="top:220.60px;font:400 10.21px/13.27px 'Liberation Sans', sans-serif;color:#000;white-space:pre;right:359.20px;text-align:right;transform:scaleX(0.955);transform-origin:right 50%;">1</div><div style="top:220.60px;font:400 10.21px/13.27px 'Liberation Sans', sans-serif;color:#000;white-space:pre;right:321.20px;text-align:right;transform:scaleX(0.955);transform-origin:right 50%;">1</div><div style="left:687.90px;top:219.50px;width:37.00px;height:14.18px;background:rgb(239,239,239);"></div><div style="left:725.90px;top:219.50px;width:37.00px;height:14.18px;background:rgb(198,215,243);"></div><div style="top:220.60px;font:400 10.21px/13.27px 'Liberation Sans', sans-serif;color:#000;white-space:pre;right:277.20px;text-align:right;transform:scaleX(0.955);transform-origin:right 50%;">1</div><div style="top:220.60px;font:400 10.21px/13.27px 'Liberation Sans', sans-serif;color:#000;white-space:pre;right:239.20px;text-align:right;transform:scaleX(0.955);transform-origin:right 50%;">1</div><div style="left:769.90px;top:219.50px;width:37.00px;height:14.18px;background:#b7e1cd;"></div><div style="left:807.90px;top:219.50px;width:37.00px;height:14.18px;background:#b7e1cd;"></div><div style="top:220.60px;font:400 10.21px/13.27px 'Liberation Sans', sans-serif;color:#000;white-space:pre;right:195.20px;text-align:right;transform:scaleX(0.955);transform-origin:right 50%;">0</div><div style="top:220.60px;font:400 10.21px/13.27px 'Liberation Sans', sans-serif;color:#000;white-space:pre;right:157.20px;text-align:right;transform:scaleX(0.955);transform-origin:right 50%;">0</div><div style="left:851.90px;top:219.50px;width:37.00px;height:14.18px;background:#b7e1cd;"></div><div style="left:889.90px;top:219.50px;width:37.10px;height:14.18px;background:#b7e1cd;"></div><div style="top:220.60px;font:400 10.21px/13.27px 'Liberation Sans', sans-serif;color:#000;white-space:pre;right:113.20px;text-align:right;transform:scaleX(0.955);transform-origin:right 50%;">0</div><div style="top:220.60px;font:400 10.21px/13.27px 'Liberation Sans', sans-serif;color:#000;white-space:pre;right:75.10px;text-align:right;transform:scaleX(0.955);transform-origin:right 50%;">0</div><div style="left:128.00px;top:234.88px;width:37.00px;height:14.28px;background:#efefef;"></div><div style="top:236.69px;font:400 9.80px/12.74px 'Liberation Sans', sans-serif;color:#000;white-space:pre;left:-53.35px;width:400px;text-align:center;letter-spacing:0.2px;color:#111;">triceps</div><div style="top:236.08px;font:700 10.21px/13.27px 'Liberation Sans', sans-serif;color:#1a1a1a;white-space:pre;right:814.50px;text-align:right;transform:scaleX(0.955);transform-origin:right 50%;">7</div><div style="top:236.08px;font:400 10.21px/13.27px 'Liberation Sans', sans-serif;color:#000;white-space:pre;left:190.90px;transform:scaleX(0.955);transform-origin:left 50%;">Pompki odwrotne na ławce - Bench Dips</div><div style="left:524.10px;top:234.88px;width:36.80px;height:14.28px;background:rgb(239,239,239);"></div><div style="left:561.90px;top:234.88px;width:37.00px;height:14.28px;background:rgb(80,107,122);"></div><div style="top:236.08px;font:400 10.21px/13.27px 'Liberation Sans', sans-serif;color:#000;white-space:pre;right:441.20px;text-align:right;transform:scaleX(0.955);transform-origin:right 50%;">1</div><div style="top:236.08px;font:400 10.21px/13.27px 'Liberation Sans', sans-serif;color:#000;white-space:pre;right:403.20px;text-align:right;transform:scaleX(0.955);transform-origin:right 50%;">15</div><div style="left:605.90px;top:234.88px;width:37.00px;height:14.28px;background:rgb(239,239,239);"></div><div style="left:643.90px;top:234.88px;width:37.00px;height:14.28px;background:rgb(198,215,243);"></div><div style="top:236.08px;font:400 10.21px/13.27px 'Liberation Sans', sans-serif;color:#000;white-space:pre;right:359.20px;text-align:right;transform:scaleX(0.955);transform-origin:right 50%;">1</div><div style="top:236.08px;font:400 10.21px/13.27px 'Liberation Sans', sans-serif;color:#000;white-space:pre;right:321.20px;text-align:right;transform:scaleX(0.955);transform-origin:right 50%;">1</div><div style="left:687.90px;top:234.88px;width:37.00px;height:14.28px;background:rgb(239,239,239);"></div><div style="left:725.90px;top:234.88px;width:37.00px;height:14.28px;background:rgb(198,215,243);"></div><div style="top:236.08px;font:400 10.21px/13.27px 'Liberation Sans', sans-serif;color:#000;white-space:pre;right:277.20px;text-align:right;transform:scaleX(0.955);transform-origin:right 50%;">1</div><div style="top:236.08px;font:400 10.21px/13.27px 'Liberation Sans', sans-serif;color:#000;white-space:pre;right:239.20px;text-align:right;transform:scaleX(0.955);transform-origin:right 50%;">1</div><div style="left:769.90px;top:234.88px;width:37.00px;height:14.28px;background:#b7e1cd;"></div><div style="left:807.90px;top:234.88px;width:37.00px;height:14.28px;background:#b7e1cd;"></div><div style="top:236.08px;font:400 10.21px/13.27px 'Liberation Sans', sans-serif;color:#000;white-space:pre;right:195.20px;text-align:right;transform:scaleX(0.955);transform-origin:right 50%;">0</div><div style="top:236.08px;font:400 10.21px/13.27px 'Liberation Sans', sans-serif;color:#000;white-space:pre;right:157.20px;text-align:right;transform:scaleX(0.955);transform-origin:right 50%;">0</div><div style="left:851.90px;top:234.88px;width:37.00px;height:14.28px;background:#b7e1cd;"></div><div style="left:889.90px;top:234.88px;width:37.10px;height:14.28px;background:#b7e1cd;"></div><div style="top:236.08px;font:400 10.21px/13.27px 'Liberation Sans', sans-serif;color:#000;white-space:pre;right:113.20px;text-align:right;transform:scaleX(0.955);transform-origin:right 50%;">0</div><div style="top:236.08px;font:400 10.21px/13.27px 'Liberation Sans', sans-serif;color:#000;white-space:pre;right:75.10px;text-align:right;transform:scaleX(0.955);transform-origin:right 50%;">0</div><div style="left:188.80px;top:280.80px;width:334.50px;height:15.28px;background:#d9ead3;"></div><div style="top:282.10px;font:700 10.72px/13.94px 'Liberation Sans', sans-serif;color:#000;white-space:pre;left:156.05px;width:400px;text-align:center;">03.01.2024 środa</div><div style="top:284.09px;font:400 9.60px/12.48px 'Liberation Mono', monospace;color:#303030;white-space:pre;left:526.90px;letter-spacing:0.72px;">I seria</div><div style="top:284.09px;font:400 9.60px/12.48px 'Liberation Mono', monospace;color:#303030;white-space:pre;left:608.70px;letter-spacing:0.72px;">II seria</div><div style="top:284.09px;font:400 9.60px/12.48px 'Liberation Mono', monospace;color:#303030;white-space:pre;left:690.70px;letter-spacing:0.72px;">III seria</div><div style="top:284.09px;font:400 9.60px/12.48px 'Liberation Mono', monospace;color:#303030;white-space:pre;left:772.70px;letter-spacing:0.72px;">IV seria</div><div style="top:284.09px;font:400 9.60px/12.48px 'Liberation Mono', monospace;color:#303030;white-space:pre;left:854.70px;letter-spacing:0.72px;">V seria</div><div style="left:524.10px;top:296.78px;width:36.80px;height:14.28px;background:#efefef;"></div><div style="left:561.90px;top:296.78px;width:37.00px;height:14.28px;background:#efefef;"></div><div style="top:297.98px;font:400 10.21px/13.27px 'Liberation Sans', sans-serif;color:#000;white-space:pre;right:441.20px;text-align:right;transform:scaleX(0.955);transform-origin:right 50%;">kg</div><div style="top:297.98px;font:400 10.21px/13.27px 'Liberation Sans', sans-serif;color:#000;white-space:pre;right:403.20px;text-align:right;transform:scaleX(0.955);transform-origin:right 50%;">powt.</div><div style="left:605.90px;top:296.78px;width:37.00px;height:14.28px;background:#efefef;"></div><div style="left:643.90px;top:296.78px;width:37.00px;height:14.28px;background:#efefef;"></div><div style="top:297.98px;font:400 10.21px/13.27px 'Liberation Sans', sans-serif;color:#000;white-space:pre;right:359.20px;text-align:right;transform:scaleX(0.955);transform-origin:right 50%;">kg</div><div style="top:297.98px;font:400 10.21px/13.27px 'Liberation Sans', sans-serif;color:#000;white-space:pre;right:321.20px;text-align:right;transform:scaleX(0.955);transform-origin:right 50%;">powt.</div><div style="left:687.90px;top:296.78px;width:37.00px;height:14.28px;background:#efefef;"></div><div style="left:725.90px;top:296.78px;width:37.00px;height:14.28px;background:#efefef;"></div><div style="top:297.98px;font:400 10.21px/13.27px 'Liberation Sans', sans-serif;color:#000;white-space:pre;right:277.20px;text-align:right;transform:scaleX(0.955);transform-origin:right 50%;">kg</div><div style="top:297.98px;font:400 10.21px/13.27px 'Liberation Sans', sans-serif;color:#000;white-space:pre;right:239.20px;text-align:right;transform:scaleX(0.955);transform-origin:right 50%;">powt.</div><div style="left:769.90px;top:296.78px;width:37.00px;height:14.28px;background:#efefef;"></div><div style="left:807.90px;top:296.78px;width:37.00px;height:14.28px;background:#efefef;"></div><div style="top:297.98px;font:400 10.21px/13.27px 'Liberation Sans', sans-serif;color:#000;white-space:pre;right:195.20px;text-align:right;transform:scaleX(0.955);transform-origin:right 50%;">kg</div><div style="top:297.98px;font:400 10.21px/13.27px 'Liberation Sans', sans-serif;color:#000;white-space:pre;right:157.20px;text-align:right;transform:scaleX(0.955);transform-origin:right 50%;">powt.</div><div style="left:851.90px;top:296.78px;width:37.00px;height:14.28px;background:#efefef;"></div><div style="left:889.90px;top:296.78px;width:37.10px;height:14.28px;background:#efefef;"></div><div style="top:297.98px;font:400 10.21px/13.27px 'Liberation Sans', sans-serif;color:#000;white-space:pre;right:113.20px;text-align:right;transform:scaleX(0.955);transform-origin:right 50%;">kg</div><div style="top:297.98px;font:400 10.21px/13.27px 'Liberation Sans', sans-serif;color:#000;white-space:pre;right:75.10px;text-align:right;transform:scaleX(0.955);transform-origin:right 50%;">powt.</div><div style="left:34.20px;top:296.78px;width:72.60px;height:14.28px;background:#efefef;"></div><div style="top:298.59px;font:400 9.80px/12.74px 'Liberation Sans', sans-serif;color:#000;white-space:pre;left:-129.35px;width:400px;text-align:center;letter-spacing:0.2px;color:#111;">plecy</div><div style="left:34.20px;top:327.73px;width:72.60px;height:14.28px;background:#efefef;"></div><div style="top:329.54px;font:400 9.80px/12.74px 'Liberation Sans', sans-serif;color:#000;white-space:pre;left:-129.35px;width:400px;text-align:center;letter-spacing:0.2px;color:#111;">biceps</div><div style="left:34.20px;top:358.68px;width:72.60px;height:14.28px;background:#efefef;"></div><div style="top:360.49px;font:400 9.80px/12.74px 'Liberation Sans', sans-serif;color:#000;white-space:pre;left:-129.35px;width:400px;text-align:center;letter-spacing:0.2px;color:#111;">brzuch</div><div style="left:128.00px;top:312.26px;width:37.00px;height:14.28px;background:#efefef;"></div><div style="top:314.07px;font:400 9.80px/12.74px 'Liberation Sans', sans-serif;color:#000;white-space:pre;left:-53.35px;width:400px;text-align:center;letter-spacing:0.2px;color:#111;">plecy</div><div style="top:313.46px;font:700 10.21px/13.27px 'Liberation Sans', sans-serif;color:#1a1a1a;white-space:pre;right:814.50px;text-align:right;transform:scaleX(0.955);transform-origin:right 50%;">1</div><div style="left:188.00px;top:326.73px;width:335.10px;height:0.80px;background:#ededed;"></div><div style="top:313.46px;font:400 10.21px/13.27px 'Liberation Sans', sans-serif;color:#000;white-space:pre;left:190.90px;transform:scaleX(0.955);transform-origin:left 50%;">Martwy ciąg -  Deadlift</div><div style="left:524.10px;top:312.26px;width:36.80px;height:14.28px;background:rgb(198,198,198);"></div><div style="left:561.90px;top:312.26px;width:37.00px;height:14.28px;background:rgb(139,161,182);"></div><div style="top:313.46px;font:400 10.21px/13.27px 'Liberation Sans', sans-serif;color:#000;white-space:pre;right:441.20px;text-align:right;transform:scaleX(0.955);transform-origin:right 50%;">80</div><div style="top:313.46px;font:400 10.21px/13.27px 'Liberation Sans', sans-serif;color:#000;white-space:pre;right:403.20px;text-align:right;transform:scaleX(0.955);transform-origin:right 50%;">8</div><div style="left:605.90px;top:312.26px;width:37.00px;height:14.28px;background:rgb(239,239,239);"></div><div style="left:643.90px;top:312.26px;width:37.00px;height:14.28px;background:rgb(198,215,243);"></div><div style="top:313.46px;font:400 10.21px/13.27px 'Liberation Sans', sans-serif;color:#000;white-space:pre;right:359.20px;text-align:right;transform:scaleX(0.955);transform-origin:right 50%;">1</div><div style="top:313.46px;font:400 10.21px/13.27px 'Liberation Sans', sans-serif;color:#000;white-space:pre;right:321.20px;text-align:right;transform:scaleX(0.955);transform-origin:right 50%;">1</div><div style="left:687.90px;top:312.26px;width:37.00px;height:14.28px;background:rgb(239,239,239);"></div><div style="left:725.90px;top:312.26px;width:37.00px;height:14.28px;background:rgb(198,215,243);"></div><div style="top:313.46px;font:400 10.21px/13.27px 'Liberation Sans', sans-serif;color:#000;white-space:pre;right:277.20px;text-align:right;transform:scaleX(0.955);transform-origin:right 50%;">1</div><div style="top:313.46px;font:400 10.21px/13.27px 'Liberation Sans', sans-serif;color:#000;white-space:pre;right:239.20px;text-align:right;transform:scaleX(0.955);transform-origin:right 50%;">1</div><div style="left:769.90px;top:312.26px;width:37.00px;height:14.28px;background:rgb(239,239,239);"></div><div style="left:807.90px;top:312.26px;width:37.00px;height:14.28px;background:rgb(198,215,243);"></div><div style="top:313.46px;font:400 10.21px/13.27px 'Liberation Sans', sans-serif;color:#000;white-space:pre;right:195.20px;text-align:right;transform:scaleX(0.955);transform-origin:right 50%;">1</div><div style="top:313.46px;font:400 10.21px/13.27px 'Liberation Sans', sans-serif;color:#000;white-space:pre;right:157.20px;text-align:right;transform:scaleX(0.955);transform-origin:right 50%;">1</div><div style="left:851.90px;top:312.26px;width:37.00px;height:14.28px;background:#b7e1cd;"></div><div style="left:889.90px;top:312.26px;width:37.10px;height:14.28px;background:#b7e1cd;"></div><div style="top:313.46px;font:400 10.21px/13.27px 'Liberation Sans', sans-serif;color:#000;white-space:pre;right:113.20px;text-align:right;transform:scaleX(0.955);transform-origin:right 50%;">0</div><div style="top:313.46px;font:400 10.21px/13.27px 'Liberation Sans', sans-serif;color:#000;white-space:pre;right:75.10px;text-align:right;transform:scaleX(0.955);transform-origin:right 50%;">0</div><div style="left:128.00px;top:327.73px;width:37.00px;height:14.28px;background:#efefef;"></div><div style="top:329.54px;font:400 9.80px/12.74px 'Liberation Sans', sans-serif;color:#000;white-space:pre;left:-53.35px;width:400px;text-align:center;letter-spacing:0.2px;color:#111;">plecy</div><div style="top:328.93px;font:700 10.21px/13.27px 'Liberation Sans', sans-serif;color:#1a1a1a;white-space:pre;right:814.50px;text-align:right;transform:scaleX(0.955);transform-origin:right 50%;">2</div><div style="left:188.00px;top:342.21px;width:335.10px;height:0.80px;background:#ededed;"></div><div style="top:328.93px;font:400 10.21px/13.27px 'Liberation Sans', sans-serif;color:#000;white-space:pre;left:190.90px;transform:scaleX(0.955);transform-origin:left 50%;">Wiosłowanie hantlami na ławce dodatniej - Dumbbell Row</div><div style="left:524.10px;top:327.73px;width:36.80px;height:14.28px;background:rgb(232,232,232);"></div><div style="left:561.90px;top:327.73px;width:37.00px;height:14.28px;background:rgb(80,107,122);"></div><div style="top:328.93px;font:400 10.21px/13.27px 'Liberation Sans', sans-serif;color:#000;white-space:pre;right:441.20px;text-align:right;transform:scaleX(0.955);transform-origin:right 50%;">15</div><div style="top:328.93px;font:400 10.21px/13.27px 'Liberation Sans', sans-serif;color:#000;white-space:pre;right:403.20px;text-align:right;transform:scaleX(0.955);transform-origin:right 50%;">15</div><div style="left:605.90px;top:327.73px;width:37.00px;height:14.28px;background:rgb(239,239,239);"></div><div style="left:643.90px;top:327.73px;width:37.00px;height:14.28px;background:rgb(198,215,243);"></div><div style="top:328.93px;font:400 10.21px/13.27px 'Liberation Sans', sans-serif;color:#000;white-space:pre;right:359.20px;text-align:right;transform:scaleX(0.955);transform-origin:right 50%;">1</div><div style="top:328.93px;font:400 10.21px/13.27px 'Liberation Sans', sans-serif;color:#000;white-space:pre;right:321.20px;text-align:right;transform:scaleX(0.955);transform-origin:right 50%;">1</div><div style="left:687.90px;top:327.73px;width:37.00px;height:14.28px;background:rgb(239,239,239);"></div><div style="left:725.90px;top:327.73px;width:37.00px;height:14.28px;background:rgb(198,215,243);"></div><div style="top:328.93px;font:400 10.21px/13.27px 'Liberation Sans', sans-serif;color:#000;white-space:pre;right:277.20px;text-align:right;transform:scaleX(0.955);transform-origin:right 50%;">1</div><div style="top:328.93px;font:400 10.21px/13.27px 'Liberation Sans', sans-serif;color:#000;white-space:pre;right:239.20px;text-align:right;transform:scaleX(0.955);transform-origin:right 50%;">1</div><div style="left:769.90px;top:327.73px;width:37.00px;height:14.28px;background:#b7e1cd;"></div><div style="left:807.90px;top:327.73px;width:37.00px;height:14.28px;background:#b7e1cd;"></div><div style="top:328.93px;font:400 10.21px/13.27px 'Liberation Sans', sans-serif;color:#000;white-space:pre;right:195.20px;text-align:right;transform:scaleX(0.955);transform-origin:right 50%;">0</div><div style="top:328.93px;font:400 10.21px/13.27px 'Liberation Sans', sans-serif;color:#000;white-space:pre;right:157.20px;text-align:right;transform:scaleX(0.955);transform-origin:right 50%;">0</div><div style="left:851.90px;top:327.73px;width:37.00px;height:14.28px;background:#b7e1cd;"></div><div style="left:889.90px;top:327.73px;width:37.10px;height:14.28px;background:#b7e1cd;"></div><div style="top:328.93px;font:400 10.21px/13.27px 'Liberation Sans', sans-serif;color:#000;white-space:pre;right:113.20px;text-align:right;transform:scaleX(0.955);transform-origin:right 50%;">0</div><div style="top:328.93px;font:400 10.21px/13.27px 'Liberation Sans', sans-serif;color:#000;white-space:pre;right:75.10px;text-align:right;transform:scaleX(0.955);transform-origin:right 50%;">0</div><div style="left:128.00px;top:343.21px;width:37.00px;height:14.28px;background:#efefef;"></div><div style="top:345.02px;font:400 9.80px/12.74px 'Liberation Sans', sans-serif;color:#000;white-space:pre;left:-53.35px;width:400px;text-align:center;letter-spacing:0.2px;color:#111;">plecy</div><div style="top:344.41px;font:700 10.21px/13.27px 'Liberation Sans', sans-serif;color:#1a1a1a;white-space:pre;right:814.50px;text-align:right;transform:scaleX(0.955);transform-origin:right 50%;">3</div><div style="left:188.00px;top:357.68px;width:335.10px;height:0.80px;background:#ededed;"></div><div style="top:344.41px;font:400 10.21px/13.27px 'Liberation Sans', sans-serif;color:#000;white-space:pre;left:190.90px;transform:scaleX(0.955);transform-origin:left 50%;">Podciąganie hantli do boków - Dumbbell Lateral Raise</div><div style="left:524.10px;top:343.21px;width:36.80px;height:14.28px;background:rgb(236,236,236);"></div><div style="left:561.90px;top:343.21px;width:37.00px;height:14.28px;background:rgb(122,146,165);"></div><div style="top:344.41px;font:400 10.21px/13.27px 'Liberation Sans', sans-serif;color:#000;white-space:pre;right:441.20px;text-align:right;transform:scaleX(0.955);transform-origin:right 50%;">7</div><div style="top:344.41px;font:400 10.21px/13.27px 'Liberation Sans', sans-serif;color:#000;white-space:pre;right:403.20px;text-align:right;transform:scaleX(0.955);transform-origin:right 50%;">10</div><div style="left:605.90px;top:343.21px;width:37.00px;height:14.28px;background:rgb(239,239,239);"></div><div style="left:643.90px;top:343.21px;width:37.00px;height:14.28px;background:rgb(198,215,243);"></div><div style="top:344.41px;font:400 10.21px/13.27px 'Liberation Sans', sans-serif;color:#000;white-space:pre;right:359.20px;text-align:right;transform:scaleX(0.955);transform-origin:right 50%;">1</div><div style="top:344.41px;font:400 10.21px/13.27px 'Liberation Sans', sans-serif;color:#000;white-space:pre;right:321.20px;text-align:right;transform:scaleX(0.955);transform-origin:right 50%;">1</div><div style="left:687.90px;top:343.21px;width:37.00px;height:14.28px;background:rgb(239,239,239);"></div><div style="left:725.90px;top:343.21px;width:37.00px;height:14.28px;background:rgb(198,215,243);"></div><div style="top:344.41px;font:400 10.21px/13.27px 'Liberation Sans', sans-serif;color:#000;white-space:pre;right:277.20px;text-align:right;transform:scaleX(0.955);transform-origin:right 50%;">1</div><div style="top:344.41px;font:400 10.21px/13.27px 'Liberation Sans', sans-serif;color:#000;white-space:pre;right:239.20px;text-align:right;transform:scaleX(0.955);transform-origin:right 50%;">1</div><div style="left:769.90px;top:343.21px;width:37.00px;height:14.28px;background:#b7e1cd;"></div><div style="left:807.90px;top:343.21px;width:37.00px;height:14.28px;background:#b7e1cd;"></div><div style="top:344.41px;font:400 10.21px/13.27px 'Liberation Sans', sans-serif;color:#000;white-space:pre;right:195.20px;text-align:right;transform:scaleX(0.955);transform-origin:right 50%;">0</div><div style="top:344.41px;font:400 10.21px/13.27px 'Liberation Sans', sans-serif;color:#000;white-space:pre;right:157.20px;text-align:right;transform:scaleX(0.955);transform-origin:right 50%;">0</div><div style="left:851.90px;top:343.21px;width:37.00px;height:14.28px;background:#b7e1cd;"></div><div style="left:889.90px;top:343.21px;width:37.10px;height:14.28px;background:#b7e1cd;"></div><div style="top:344.41px;font:400 10.21px/13.27px 'Liberation Sans', sans-serif;color:#000;white-space:pre;right:113.20px;text-align:right;transform:scaleX(0.955);transform-origin:right 50%;">0</div><div style="top:344.41px;font:400 10.21px/13.27px 'Liberation Sans', sans-serif;color:#000;white-space:pre;right:75.10px;text-align:right;transform:scaleX(0.955);transform-origin:right 50%;">0</div><div style="left:128.00px;top:358.68px;width:37.00px;height:14.28px;background:#efefef;"></div><div style="top:360.49px;font:400 9.80px/12.74px 'Liberation Sans', sans-serif;color:#000;white-space:pre;left:-53.35px;width:400px;text-align:center;letter-spacing:0.2px;color:#111;">biceps</div><div style="top:359.89px;font:700 10.21px/13.27px 'Liberation Sans', sans-serif;color:#1a1a1a;white-space:pre;right:814.50px;text-align:right;transform:scaleX(0.955);transform-origin:right 50%;">4</div><div style="left:188.00px;top:373.16px;width:335.10px;height:0.80px;background:#ededed;"></div><div style="top:359.89px;font:400 10.21px/13.27px 'Liberation Sans', sans-serif;color:#000;white-space:pre;left:190.90px;transform:scaleX(0.955);transform-origin:left 50%;">Uginanie ramion młotkowe - Hammer Curls</div><div style="left:524.10px;top:358.68px;width:36.80px;height:14.28px;background:rgb(232,232,232);"></div><div style="left:561.90px;top:358.68px;width:37.00px;height:14.28px;background:rgb(122,146,165);"></div><div style="top:359.89px;font:400 10.21px/13.27px 'Liberation Sans', sans-serif;color:#000;white-space:pre;right:441.20px;text-align:right;transform:scaleX(0.955);transform-origin:right 50%;">15</div><div style="top:359.89px;font:400 10.21px/13.27px 'Liberation Sans', sans-serif;color:#000;white-space:pre;right:403.20px;text-align:right;transform:scaleX(0.955);transform-origin:right 50%;">10</div><div style="left:605.90px;top:358.68px;width:37.00px;height:14.28px;background:rgb(239,239,239);"></div><div style="left:643.90px;top:358.68px;width:37.00px;height:14.28px;background:rgb(198,215,243);"></div><div style="top:359.89px;font:400 10.21px/13.27px 'Liberation Sans', sans-serif;color:#000;white-space:pre;right:359.20px;text-align:right;transform:scaleX(0.955);transform-origin:right 50%;">1</div><div style="top:359.89px;font:400 10.21px/13.27px 'Liberation Sans', sans-serif;color:#000;white-space:pre;right:321.20px;text-align:right;transform:scaleX(0.955);transform-origin:right 50%;">1</div><div style="left:687.90px;top:358.68px;width:37.00px;height:14.28px;background:#b7e1cd;"></div><div style="left:725.90px;top:358.68px;width:37.00px;height:14.28px;background:#b7e1cd;"></div><div style="top:359.89px;font:400 10.21px/13.27px 'Liberation Sans', sans-serif;color:#000;white-space:pre;right:277.20px;text-align:right;transform:scaleX(0.955);transform-origin:right 50%;">0</div><div style="top:359.89px;font:400 10.21px/13.27px 'Liberation Sans', sans-serif;color:#000;white-space:pre;right:239.20px;text-align:right;transform:scaleX(0.955);transform-origin:right 50%;">0</div><div style="left:769.90px;top:358.68px;width:37.00px;height:14.28px;background:#b7e1cd;"></div><div style="left:807.90px;top:358.68px;width:37.00px;height:14.28px;background:#b7e1cd;"></div><div style="top:359.89px;font:400 10.21px/13.27px 'Liberation Sans', sans-serif;color:#000;white-space:pre;right:195.20px;text-align:right;transform:scaleX(0.955);transform-origin:right 50%;">0</div><div style="top:359.89px;font:400 10.21px/13.27px 'Liberation Sans', sans-serif;color:#000;white-space:pre;right:157.20px;text-align:right;transform:scaleX(0.955);transform-origin:right 50%;">0</div><div style="left:851.90px;top:358.68px;width:37.00px;height:14.28px;background:#b7e1cd;"></div><div style="left:889.90px;top:358.68px;width:37.10px;height:14.28px;background:#b7e1cd;"></div><div style="top:359.89px;font:400 10.21px/13.27px 'Liberation Sans', sans-serif;color:#000;white-space:pre;right:113.20px;text-align:right;transform:scaleX(0.955);transform-origin:right 50%;">0</div><div style="top:359.89px;font:400 10.21px/13.27px 'Liberation Sans', sans-serif;color:#000;white-space:pre;right:75.10px;text-align:right;transform:scaleX(0.955);transform-origin:right 50%;">0</div><div style="left:128.00px;top:374.16px;width:37.00px;height:14.28px;background:#efefef;"></div><div style="top:375.97px;font:400 9.80px/12.74px 'Liberation Sans', sans-serif;color:#000;white-space:pre;left:-53.35px;width:400px;text-align:center;letter-spacing:0.2px;color:#111;">biceps</div><div style="top:375.36px;font:700 10.21px/13.27px 'Liberation Sans', sans-serif;color:#1a1a1a;white-space:pre;right:814.50px;text-align:right;transform:scaleX(0.955);transform-origin:right 50%;">5</div><div style="left:188.00px;top:388.64px;width:335.10px;height:0.80px;background:#ededed;"></div><div style="top:375.36px;font:400 10.21px/13.27px 'Liberation Sans', sans-serif;color:#000;white-space:pre;left:190.90px;transform:scaleX(0.955);transform-origin:left 50%;">Uginanie ramion ze sztangą - Barbell Curl</div><div style="left:524.10px;top:374.16px;width:36.80px;height:14.28px;background:rgb(227,227,227);"></div><div style="left:561.90px;top:374.16px;width:37.00px;height:14.28px;background:rgb(80,107,122);"></div><div style="top:375.36px;font:400 10.21px/13.27px 'Liberation Sans', sans-serif;color:#000;white-space:pre;right:441.20px;text-align:right;transform:scaleX(0.955);transform-origin:right 50%;">25</div><div style="top:375.36px;font:400 10.21px/13.27px 'Liberation Sans', sans-serif;color:#000;white-space:pre;right:403.20px;text-align:right;transform:scaleX(0.955);transform-origin:right 50%;">15</div><div style="left:605.90px;top:374.16px;width:37.00px;height:14.28px;background:rgb(239,239,239);"></div><div style="left:643.90px;top:374.16px;width:37.00px;height:14.28px;background:rgb(198,215,243);"></div><div style="top:375.36px;font:400 10.21px/13.27px 'Liberation Sans', sans-serif;color:#000;white-space:pre;right:359.20px;text-align:right;transform:scaleX(0.955);transform-origin:right 50%;">1</div><div style="top:375.36px;font:400 10.21px/13.27px 'Liberation Sans', sans-serif;color:#000;white-space:pre;right:321.20px;text-align:right;transform:scaleX(0.955);transform-origin:right 50%;">1</div><div style="left:687.90px;top:374.16px;width:37.00px;height:14.28px;background:#b7e1cd;"></div><div style="left:725.90px;top:374.16px;width:37.00px;height:14.28px;background:#b7e1cd;"></div><div style="top:375.36px;font:400 10.21px/13.27px 'Liberation Sans', sans-serif;color:#000;white-space:pre;right:277.20px;text-align:right;transform:scaleX(0.955);transform-origin:right 50%;">0</div><div style="top:375.36px;font:400 10.21px/13.27px 'Liberation Sans', sans-serif;color:#000;white-space:pre;right:239.20px;text-align:right;transform:scaleX(0.955);transform-origin:right 50%;">0</div><div style="left:769.90px;top:374.16px;width:37.00px;height:14.28px;background:#b7e1cd;"></div><div style="left:807.90px;top:374.16px;width:37.00px;height:14.28px;background:#b7e1cd;"></div><div style="top:375.36px;font:400 10.21px/13.27px 'Liberation Sans', sans-serif;color:#000;white-space:pre;right:195.20px;text-align:right;transform:scaleX(0.955);transform-origin:right 50%;">0</div><div style="top:375.36px;font:400 10.21px/13.27px 'Liberation Sans', sans-serif;color:#000;white-space:pre;right:157.20px;text-align:right;transform:scaleX(0.955);transform-origin:right 50%;">0</div><div style="left:851.90px;top:374.16px;width:37.00px;height:14.28px;background:#b7e1cd;"></div><div style="left:889.90px;top:374.16px;width:37.10px;height:14.28px;background:#b7e1cd;"></div><div style="top:375.36px;font:400 10.21px/13.27px 'Liberation Sans', sans-serif;color:#000;white-space:pre;right:113.20px;text-align:right;transform:scaleX(0.955);transform-origin:right 50%;">0</div><div style="top:375.36px;font:400 10.21px/13.27px 'Liberation Sans', sans-serif;color:#000;white-space:pre;right:75.10px;text-align:right;transform:scaleX(0.955);transform-origin:right 50%;">0</div><div style="left:128.00px;top:389.64px;width:37.00px;height:14.28px;background:#efefef;"></div><div style="top:391.45px;font:400 9.80px/12.74px 'Liberation Sans', sans-serif;color:#000;white-space:pre;left:-53.35px;width:400px;text-align:center;letter-spacing:0.2px;color:#111;">brzuch</div><div style="top:390.84px;font:700 10.21px/13.27px 'Liberation Sans', sans-serif;color:#1a1a1a;white-space:pre;right:814.50px;text-align:right;transform:scaleX(0.955);transform-origin:right 50%;">6</div><div style="top:390.84px;font:400 10.21px/13.27px 'Liberation Sans', sans-serif;color:#000;white-space:pre;left:190.90px;transform:scaleX(0.955);transform-origin:left 50%;">Koło do brzuszków na kolanach - Ab Wheel Rollout from Knees</div><div style="left:524.10px;top:389.64px;width:36.80px;height:14.28px;background:#b7e1cd;"></div><div style="left:561.90px;top:389.64px;width:37.00px;height:14.28px;background:rgb(122,146,165);"></div><div style="top:390.84px;font:400 10.21px/13.27px 'Liberation Sans', sans-serif;color:#000;white-space:pre;right:441.20px;text-align:right;transform:scaleX(0.955);transform-origin:right 50%;">0</div><div style="top:390.84px;font:400 10.21px/13.27px 'Liberation Sans', sans-serif;color:#000;white-space:pre;right:403.20px;text-align:right;transform:scaleX(0.955);transform-origin:right 50%;">10</div><div style="left:605.90px;top:389.64px;width:37.00px;height:14.28px;background:rgb(239,239,239);"></div><div style="left:643.90px;top:389.64px;width:37.00px;height:14.28px;background:rgb(198,215,243);"></div><div style="top:390.84px;font:400 10.21px/13.27px 'Liberation Sans', sans-serif;color:#000;white-space:pre;right:359.20px;text-align:right;transform:scaleX(0.955);transform-origin:right 50%;">1</div><div style="top:390.84px;font:400 10.21px/13.27px 'Liberation Sans', sans-serif;color:#000;white-space:pre;right:321.20px;text-align:right;transform:scaleX(0.955);transform-origin:right 50%;">1</div><div style="left:687.90px;top:389.64px;width:37.00px;height:14.28px;background:rgb(239,239,239);"></div><div style="left:725.90px;top:389.64px;width:37.00px;height:14.28px;background:rgb(198,215,243);"></div><div style="top:390.84px;font:400 10.21px/13.27px 'Liberation Sans', sans-serif;color:#000;white-space:pre;right:277.20px;text-align:right;transform:scaleX(0.955);transform-origin:right 50%;">1</div><div style="top:390.84px;font:400 10.21px/13.27px 'Liberation Sans', sans-serif;color:#000;white-space:pre;right:239.20px;text-align:right;transform:scaleX(0.955);transform-origin:right 50%;">1</div><div style="left:769.90px;top:389.64px;width:37.00px;height:14.28px;background:#b7e1cd;"></div><div style="left:807.90px;top:389.64px;width:37.00px;height:14.28px;background:#b7e1cd;"></div><div style="top:390.84px;font:400 10.21px/13.27px 'Liberation Sans', sans-serif;color:#000;white-space:pre;right:195.20px;text-align:right;transform:scaleX(0.955);transform-origin:right 50%;">0</div><div style="top:390.84px;font:400 10.21px/13.27px 'Liberation Sans', sans-serif;color:#000;white-space:pre;right:157.20px;text-align:right;transform:scaleX(0.955);transform-origin:right 50%;">0</div><div style="left:851.90px;top:389.64px;width:37.00px;height:14.28px;background:#b7e1cd;"></div><div style="left:889.90px;top:389.64px;width:37.10px;height:14.28px;background:#b7e1cd;"></div><div style="top:390.84px;font:400 10.21px/13.27px 'Liberation Sans', sans-serif;color:#000;white-space:pre;right:113.20px;text-align:right;transform:scaleX(0.955);transform-origin:right 50%;">0</div><div style="top:390.84px;font:400 10.21px/13.27px 'Liberation Sans', sans-serif;color:#000;white-space:pre;right:75.10px;text-align:right;transform:scaleX(0.955);transform-origin:right 50%;">0</div><div style="left:188.80px;top:435.56px;width:334.50px;height:15.28px;background:#d9ead3;"></div><div style="top:436.86px;font:700 10.72px/13.94px 'Liberation Sans', sans-serif;color:#000;white-space:pre;left:156.05px;width:400px;text-align:center;">05.01.2024 piątek</div><div style="top:438.85px;font:400 9.60px/12.48px 'Liberation Mono', monospace;color:#303030;white-space:pre;left:526.90px;letter-spacing:0.72px;">I seria</div><div style="top:438.85px;font:400 9.60px/12.48px 'Liberation Mono', monospace;color:#303030;white-space:pre;left:608.70px;letter-spacing:0.72px;">II seria</div><div style="top:438.85px;font:400 9.60px/12.48px 'Liberation Mono', monospace;color:#303030;white-space:pre;left:690.70px;letter-spacing:0.72px;">III seria</div><div style="top:438.85px;font:400 9.60px/12.48px 'Liberation Mono', monospace;color:#303030;white-space:pre;left:772.70px;letter-spacing:0.72px;">IV seria</div><div style="top:438.85px;font:400 9.60px/12.48px 'Liberation Mono', monospace;color:#303030;white-space:pre;left:854.70px;letter-spacing:0.72px;">V seria</div><div style="left:524.10px;top:451.54px;width:36.80px;height:14.28px;background:#efefef;"></div><div style="left:561.90px;top:451.54px;width:37.00px;height:14.28px;background:#efefef;"></div><div style="top:452.74px;font:400 10.21px/13.27px 'Liberation Sans', sans-serif;color:#000;white-space:pre;right:441.20px;text-align:right;transform:scaleX(0.955);transform-origin:right 50%;">kg</div><div style="top:452.74px;font:400 10.21px/13.27px 'Liberation Sans', sans-serif;color:#000;white-space:pre;right:403.20px;text-align:right;transform:scaleX(0.955);transform-origin:right 50%;">powt.</div><div style="left:605.90px;top:451.54px;width:37.00px;height:14.28px;background:#efefef;"></div><div style="left:643.90px;top:451.54px;width:37.00px;height:14.28px;background:#efefef;"></div><div style="top:452.74px;font:400 10.21px/13.27px 'Liberation Sans', sans-serif;color:#000;white-space:pre;right:359.20px;text-align:right;transform:scaleX(0.955);transform-origin:right 50%;">kg</div><div style="top:452.74px;font:400 10.21px/13.27px 'Liberation Sans', sans-serif;color:#000;white-space:pre;right:321.20px;text-align:right;transform:scaleX(0.955);transform-origin:right 50%;">powt.</div><div style="left:687.90px;top:451.54px;width:37.00px;height:14.28px;background:#efefef;"></div><div style="left:725.90px;top:451.54px;width:37.00px;height:14.28px;background:#efefef;"></div><div style="top:452.74px;font:400 10.21px/13.27px 'Liberation Sans', sans-serif;color:#000;white-space:pre;right:277.20px;text-align:right;transform:scaleX(0.955);transform-origin:right 50%;">kg</div><div style="top:452.74px;font:400 10.21px/13.27px 'Liberation Sans', sans-serif;color:#000;white-space:pre;right:239.20px;text-align:right;transform:scaleX(0.955);transform-origin:right 50%;">powt.</div><div style="left:769.90px;top:451.54px;width:37.00px;height:14.28px;background:#efefef;"></div><div style="left:807.90px;top:451.54px;width:37.00px;height:14.28px;background:#efefef;"></div><div style="top:452.74px;font:400 10.21px/13.27px 'Liberation Sans', sans-serif;color:#000;white-space:pre;right:195.20px;text-align:right;transform:scaleX(0.955);transform-origin:right 50%;">kg</div><div style="top:452.74px;font:400 10.21px/13.27px 'Liberation Sans', sans-serif;color:#000;white-space:pre;right:157.20px;text-align:right;transform:scaleX(0.955);transform-origin:right 50%;">powt.</div><div style="left:851.90px;top:451.54px;width:37.00px;height:14.28px;background:#efefef;"></div><div style="left:889.90px;top:451.54px;width:37.10px;height:14.28px;background:#efefef;"></div><div style="top:452.74px;font:400 10.21px/13.27px 'Liberation Sans', sans-serif;color:#000;white-space:pre;right:113.20px;text-align:right;transform:scaleX(0.955);transform-origin:right 50%;">kg</div><div style="top:452.74px;font:400 10.21px/13.27px 'Liberation Sans', sans-serif;color:#000;white-space:pre;right:75.10px;text-align:right;transform:scaleX(0.955);transform-origin:right 50%;">powt.</div><div style="left:34.20px;top:451.54px;width:72.60px;height:14.28px;background:#efefef;"></div><div style="top:453.35px;font:400 9.80px/12.74px 'Liberation Sans', sans-serif;color:#000;white-space:pre;left:-129.35px;width:400px;text-align:center;letter-spacing:0.2px;color:#111;">nogi</div><div style="left:34.20px;top:482.49px;width:72.60px;height:14.28px;background:#efefef;"></div><div style="top:484.30px;font:400 9.80px/12.74px 'Liberation Sans', sans-serif;color:#000;white-space:pre;left:-129.35px;width:400px;text-align:center;letter-spacing:0.2px;color:#111;">klatka</div><div style="left:34.20px;top:513.44px;width:72.60px;height:14.28px;background:#efefef;"></div><div style="top:515.25px;font:400 9.80px/12.74px 'Liberation Sans', sans-serif;color:#000;white-space:pre;left:-129.35px;width:400px;text-align:center;letter-spacing:0.2px;color:#111;">barki</div><div style="left:128.00px;top:467.02px;width:37.00px;height:14.28px;background:#efefef;"></div><div style="top:468.83px;font:400 9.80px/12.74px 'Liberation Sans', sans-serif;color:#000;white-space:pre;left:-53.35px;width:400px;text-align:center;letter-spacing:0.2px;color:#111;">nogi</div><div style="top:468.22px;font:700 10.21px/13.27px 'Liberation Sans', sans-serif;color:#1a1a1a;white-space:pre;right:814.50px;text-align:right;transform:scaleX(0.955);transform-origin:right 50%;">1</div><div style="left:188.00px;top:481.49px;width:335.10px;height:0.80px;background:#ededed;"></div><div style="top:468.22px;font:400 10.21px/13.27px 'Liberation Sans', sans-serif;color:#000;white-space:pre;left:190.90px;transform:scaleX(0.955);transform-origin:left 50%;">Przysiad ze sztangą na plecach Back Squat with Barbell</div><div style="left:524.10px;top:467.02px;width:36.80px;height:14.28px;background:rgb(214,214,214);"></div><div style="left:561.90px;top:467.02px;width:37.00px;height:14.28px;background:rgb(122,146,165);"></div><div style="top:468.22px;font:400 10.21px/13.27px 'Liberation Sans', sans-serif;color:#000;white-space:pre;right:441.20px;text-align:right;transform:scaleX(0.955);transform-origin:right 50%;">50</div><div style="top:468.22px;font:400 10.21px/13.27px 'Liberation Sans', sans-serif;color:#000;white-space:pre;right:403.20px;text-align:right;transform:scaleX(0.955);transform-origin:right 50%;">10</div><div style="left:605.90px;top:467.02px;width:37.00px;height:14.28px;background:rgb(239,239,239);"></div><div style="left:643.90px;top:467.02px;width:37.00px;height:14.28px;background:rgb(198,215,243);"></div><div style="top:468.22px;font:400 10.21px/13.27px 'Liberation Sans', sans-serif;color:#000;white-space:pre;right:359.20px;text-align:right;transform:scaleX(0.955);transform-origin:right 50%;">1</div><div style="top:468.22px;font:400 10.21px/13.27px 'Liberation Sans', sans-serif;color:#000;white-space:pre;right:321.20px;text-align:right;transform:scaleX(0.955);transform-origin:right 50%;">1</div><div style="left:687.90px;top:467.02px;width:37.00px;height:14.28px;background:rgb(239,239,239);"></div><div style="left:725.90px;top:467.02px;width:37.00px;height:14.28px;background:rgb(198,215,243);"></div><div style="top:468.22px;font:400 10.21px/13.27px 'Liberation Sans', sans-serif;color:#000;white-space:pre;right:277.20px;text-align:right;transform:scaleX(0.955);transform-origin:right 50%;">1</div><div style="top:468.22px;font:400 10.21px/13.27px 'Liberation Sans', sans-serif;color:#000;white-space:pre;right:239.20px;text-align:right;transform:scaleX(0.955);transform-origin:right 50%;">1</div><div style="left:769.90px;top:467.02px;width:37.00px;height:14.28px;background:rgb(239,239,239);"></div><div style="left:807.90px;top:467.02px;width:37.00px;height:14.28px;background:rgb(198,215,243);"></div><div style="top:468.22px;font:400 10.21px/13.27px 'Liberation Sans', sans-serif;color:#000;white-space:pre;right:195.20px;text-align:right;transform:scaleX(0.955);transform-origin:right 50%;">1</div><div style="top:468.22px;font:400 10.21px/13.27px 'Liberation Sans', sans-serif;color:#000;white-space:pre;right:157.20px;text-align:right;transform:scaleX(0.955);transform-origin:right 50%;">1</div><div style="left:851.90px;top:467.02px;width:37.00px;height:14.28px;background:#b7e1cd;"></div><div style="left:889.90px;top:467.02px;width:37.10px;height:14.28px;background:#b7e1cd;"></div><div style="top:468.22px;font:400 10.21px/13.27px 'Liberation Sans', sans-serif;color:#000;white-space:pre;right:113.20px;text-align:right;transform:scaleX(0.955);transform-origin:right 50%;">0</div><div style="top:468.22px;font:400 10.21px/13.27px 'Liberation Sans', sans-serif;color:#000;white-space:pre;right:75.10px;text-align:right;transform:scaleX(0.955);transform-origin:right 50%;">0</div><div style="left:128.00px;top:482.49px;width:37.00px;height:14.28px;background:#efefef;"></div><div style="top:484.30px;font:400 9.80px/12.74px 'Liberation Sans', sans-serif;color:#000;white-space:pre;left:-53.35px;width:400px;text-align:center;letter-spacing:0.2px;color:#111;">nogi</div><div style="top:483.69px;font:700 10.21px/13.27px 'Liberation Sans', sans-serif;color:#1a1a1a;white-space:pre;right:814.50px;text-align:right;transform:scaleX(0.955);transform-origin:right 50%;">2</div><div style="left:188.00px;top:496.97px;width:335.10px;height:0.80px;background:#ededed;"></div><div style="top:483.69px;font:400 10.21px/13.27px 'Liberation Sans', sans-serif;color:#000;white-space:pre;left:190.90px;transform:scaleX(0.955);transform-origin:left 50%;">Przysiad bułgarski - Bulgarian Split Squat</div><div style="left:524.10px;top:482.49px;width:36.80px;height:14.28px;background:rgb(233,233,233);"></div><div style="left:561.90px;top:482.49px;width:37.00px;height:14.28px;background:rgb(139,161,182);"></div><div style="top:483.69px;font:400 10.21px/13.27px 'Liberation Sans', sans-serif;color:#000;white-space:pre;right:441.20px;text-align:right;transform:scaleX(0.955);transform-origin:right 50%;">12</div><div style="top:483.69px;font:400 10.21px/13.27px 'Liberation Sans', sans-serif;color:#000;white-space:pre;right:403.20px;text-align:right;transform:scaleX(0.955);transform-origin:right 50%;">8</div><div style="left:605.90px;top:482.49px;width:37.00px;height:14.28px;background:rgb(239,239,239);"></div><div style="left:643.90px;top:482.49px;width:37.00px;height:14.28px;background:rgb(198,215,243);"></div><div style="top:483.69px;font:400 10.21px/13.27px 'Liberation Sans', sans-serif;color:#000;white-space:pre;right:359.20px;text-align:right;transform:scaleX(0.955);transform-origin:right 50%;">1</div><div style="top:483.69px;font:400 10.21px/13.27px 'Liberation Sans', sans-serif;color:#000;white-space:pre;right:321.20px;text-align:right;transform:scaleX(0.955);transform-origin:right 50%;">1</div><div style="left:687.90px;top:482.49px;width:37.00px;height:14.28px;background:rgb(239,239,239);"></div><div style="left:725.90px;top:482.49px;width:37.00px;height:14.28px;background:rgb(198,215,243);"></div><div style="top:483.69px;font:400 10.21px/13.27px 'Liberation Sans', sans-serif;color:#000;white-space:pre;right:277.20px;text-align:right;transform:scaleX(0.955);transform-origin:right 50%;">1</div><div style="top:483.69px;font:400 10.21px/13.27px 'Liberation Sans', sans-serif;color:#000;white-space:pre;right:239.20px;text-align:right;transform:scaleX(0.955);transform-origin:right 50%;">1</div><div style="left:769.90px;top:482.49px;width:37.00px;height:14.28px;background:#b7e1cd;"></div><div style="left:807.90px;top:482.49px;width:37.00px;height:14.28px;background:#b7e1cd;"></div><div style="top:483.69px;font:400 10.21px/13.27px 'Liberation Sans', sans-serif;color:#000;white-space:pre;right:195.20px;text-align:right;transform:scaleX(0.955);transform-origin:right 50%;">0</div><div style="top:483.69px;font:400 10.21px/13.27px 'Liberation Sans', sans-serif;color:#000;white-space:pre;right:157.20px;text-align:right;transform:scaleX(0.955);transform-origin:right 50%;">0</div><div style="left:851.90px;top:482.49px;width:37.00px;height:14.28px;background:#b7e1cd;"></div><div style="left:889.90px;top:482.49px;width:37.10px;height:14.28px;background:#b7e1cd;"></div><div style="top:483.69px;font:400 10.21px/13.27px 'Liberation Sans', sans-serif;color:#000;white-space:pre;right:113.20px;text-align:right;transform:scaleX(0.955);transform-origin:right 50%;">0</div><div style="top:483.69px;font:400 10.21px/13.27px 'Liberation Sans', sans-serif;color:#000;white-space:pre;right:75.10px;text-align:right;transform:scaleX(0.955);transform-origin:right 50%;">0</div><div style="left:128.00px;top:497.97px;width:37.00px;height:14.28px;background:#efefef;"></div><div style="top:499.78px;font:400 9.80px/12.74px 'Liberation Sans', sans-serif;color:#000;white-space:pre;left:-53.35px;width:400px;text-align:center;letter-spacing:0.2px;color:#111;">nogi</div><div style="top:499.17px;font:700 10.21px/13.27px 'Liberation Sans', sans-serif;color:#1a1a1a;white-space:pre;right:814.50px;text-align:right;transform:scaleX(0.955);transform-origin:right 50%;">3</div><div style="left:188.00px;top:512.44px;width:335.10px;height:0.80px;background:#ededed;"></div><div style="top:499.17px;font:400 10.21px/13.27px 'Liberation Sans', sans-serif;color:#000;white-space:pre;left:190.90px;transform:scaleX(0.955);transform-origin:left 50%;">Wspięcia na palce z hantlami - Dumbbell Calf Raises</div><div style="left:524.10px;top:497.97px;width:36.80px;height:14.28px;background:rgb(233,233,233);"></div><div style="left:561.90px;top:497.97px;width:37.00px;height:14.28px;background:rgb(105,130,148);"></div><div style="top:499.17px;font:400 10.21px/13.27px 'Liberation Sans', sans-serif;color:#000;white-space:pre;right:441.20px;text-align:right;transform:scaleX(0.955);transform-origin:right 50%;">12</div><div style="top:499.17px;font:400 10.21px/13.27px 'Liberation Sans', sans-serif;color:#000;white-space:pre;right:403.20px;text-align:right;transform:scaleX(0.955);transform-origin:right 50%;">12</div><div style="left:605.90px;top:497.97px;width:37.00px;height:14.28px;background:rgb(239,239,239);"></div><div style="left:643.90px;top:497.97px;width:37.00px;height:14.28px;background:rgb(198,215,243);"></div><div style="top:499.17px;font:400 10.21px/13.27px 'Liberation Sans', sans-serif;color:#000;white-space:pre;right:359.20px;text-align:right;transform:scaleX(0.955);transform-origin:right 50%;">1</div><div style="top:499.17px;font:400 10.21px/13.27px 'Liberation Sans', sans-serif;color:#000;white-space:pre;right:321.20px;text-align:right;transform:scaleX(0.955);transform-origin:right 50%;">1</div><div style="left:687.90px;top:497.97px;width:37.00px;height:14.28px;background:rgb(239,239,239);"></div><div style="left:725.90px;top:497.97px;width:37.00px;height:14.28px;background:rgb(198,215,243);"></div><div style="top:499.17px;font:400 10.21px/13.27px 'Liberation Sans', sans-serif;color:#000;white-space:pre;right:277.20px;text-align:right;transform:scaleX(0.955);transform-origin:right 50%;">1</div><div style="top:499.17px;font:400 10.21px/13.27px 'Liberation Sans', sans-serif;color:#000;white-space:pre;right:239.20px;text-align:right;transform:scaleX(0.955);transform-origin:right 50%;">1</div><div style="left:769.90px;top:497.97px;width:37.00px;height:14.28px;background:#b7e1cd;"></div><div style="left:807.90px;top:497.97px;width:37.00px;height:14.28px;background:#b7e1cd;"></div><div style="top:499.17px;font:400 10.21px/13.27px 'Liberation Sans', sans-serif;color:#000;white-space:pre;right:195.20px;text-align:right;transform:scaleX(0.955);transform-origin:right 50%;">0</div><div style="top:499.17px;font:400 10.21px/13.27px 'Liberation Sans', sans-serif;color:#000;white-space:pre;right:157.20px;text-align:right;transform:scaleX(0.955);transform-origin:right 50%;">0</div><div style="left:851.90px;top:497.97px;width:37.00px;height:14.28px;background:#b7e1cd;"></div><div style="left:889.90px;top:497.97px;width:37.10px;height:14.28px;background:#b7e1cd;"></div><div style="top:499.17px;font:400 10.21px/13.27px 'Liberation Sans', sans-serif;color:#000;white-space:pre;right:113.20px;text-align:right;transform:scaleX(0.955);transform-origin:right 50%;">0</div><div style="top:499.17px;font:400 10.21px/13.27px 'Liberation Sans', sans-serif;color:#000;white-space:pre;right:75.10px;text-align:right;transform:scaleX(0.955);transform-origin:right 50%;">0</div><div style="left:128.00px;top:513.44px;width:37.00px;height:14.28px;background:#efefef;"></div><div style="top:515.25px;font:400 9.80px/12.74px 'Liberation Sans', sans-serif;color:#000;white-space:pre;left:-53.35px;width:400px;text-align:center;letter-spacing:0.2px;color:#111;">klatka</div><div style="top:514.65px;font:700 10.21px/13.27px 'Liberation Sans', sans-serif;color:#1a1a1a;white-space:pre;right:814.50px;text-align:right;transform:scaleX(0.955);transform-origin:right 50%;">4</div><div style="top:514.65px;font:400 10.21px/13.27px 'Liberation Sans', sans-serif;color:#000;white-space:pre;left:190.90px;transform:scaleX(0.955);transform-origin:left 50%;">Wyciskanie sztangi leżąc (ławka dodatnia) - Bench Press with Barbell</div><div style="left:524.10px;top:513.44px;width:36.80px;height:14.28px;background:rgb(221,221,221);"></div><div style="left:561.90px;top:513.44px;width:37.00px;height:14.28px;background:rgb(105,130,148);"></div><div style="top:514.65px;font:400 10.21px/13.27px 'Liberation Sans', sans-serif;color:#000;white-space:pre;right:441.20px;text-align:right;transform:scaleX(0.955);transform-origin:right 50%;">35</div><div style="top:514.65px;font:400 10.21px/13.27px 'Liberation Sans', sans-serif;color:#000;white-space:pre;right:403.20px;text-align:right;transform:scaleX(0.955);transform-origin:right 50%;">12</div><div style="left:605.90px;top:513.44px;width:37.00px;height:14.28px;background:rgb(219,219,219);"></div><div style="left:643.90px;top:513.44px;width:37.00px;height:14.28px;background:rgb(122,146,165);"></div><div style="top:514.65px;font:400 10.21px/13.27px 'Liberation Sans', sans-serif;color:#000;white-space:pre;right:359.20px;text-align:right;transform:scaleX(0.955);transform-origin:right 50%;">40</div><div style="top:514.65px;font:400 10.21px/13.27px 'Liberation Sans', sans-serif;color:#000;white-space:pre;right:321.20px;text-align:right;transform:scaleX(0.955);transform-origin:right 50%;">10</div><div style="left:687.90px;top:513.44px;width:37.00px;height:14.28px;background:rgb(216,216,216);"></div><div style="left:725.90px;top:513.44px;width:37.00px;height:14.28px;background:rgb(139,161,182);"></div><div style="top:514.65px;font:400 10.21px/13.27px 'Liberation Sans', sans-serif;color:#000;white-space:pre;right:277.20px;text-align:right;transform:scaleX(0.955);transform-origin:right 50%;">45</div><div style="top:514.65px;font:400 10.21px/13.27px 'Liberation Sans', sans-serif;color:#000;white-space:pre;right:239.20px;text-align:right;transform:scaleX(0.955);transform-origin:right 50%;">8</div><div style="left:769.90px;top:513.44px;width:37.00px;height:14.28px;background:rgb(214,214,214);"></div><div style="left:807.90px;top:513.44px;width:37.00px;height:14.28px;background:rgb(198,215,243);"></div><div style="top:514.65px;font:400 10.21px/13.27px 'Liberation Sans', sans-serif;color:#000;white-space:pre;right:195.20px;text-align:right;transform:scaleX(0.955);transform-origin:right 50%;">50</div><div style="top:514.65px;font:400 10.21px/13.27px 'Liberation Sans', sans-serif;color:#000;white-space:pre;right:157.20px;text-align:right;transform:scaleX(0.955);transform-origin:right 50%;">1</div><div style="left:851.90px;top:513.44px;width:37.00px;height:14.28px;background:#b7e1cd;"></div><div style="left:889.90px;top:513.44px;width:37.10px;height:14.28px;background:#b7e1cd;"></div><div style="top:514.65px;font:400 10.21px/13.27px 'Liberation Sans', sans-serif;color:#000;white-space:pre;right:113.20px;text-align:right;transform:scaleX(0.955);transform-origin:right 50%;">0</div><div style="top:514.65px;font:400 10.21px/13.27px 'Liberation Sans', sans-serif;color:#000;white-space:pre;right:75.10px;text-align:right;transform:scaleX(0.955);transform-origin:right 50%;">0</div>
</div></div>
<div style="left:0;top:524.3px;width:33.6px;height:9.6px;background:#f8f9fa"></div>
<div style="left:33.1px;top:524.3px;width:0.7px;height:9.6px;background:#c7c7c7"></div>
<div style="left:0;top:524.0px;width:998px;height:0.7px;background:#dadce0"></div>
<div style="left:990.4px;top:77.7px;width:8.3px;height:446.6px;background:#fff"></div>
<div style="left:991.3px;top:79px;width:6.4px;height:18.8px;border-radius:3.2px;background:#dadce0"></div>
<div style="left:990.4px;top:501.2px;width:8.3px;height:0.7px;background:#e3e3e3"></div>
<div style="left:990.4px;top:513.3px;width:8.3px;height:0.7px;background:#e3e3e3"></div>
<div style="left:33.8px;top:524.4px;width:956px;height:9.2px;background:#fff"></div>
<div style="left:0;top:523.9px;width:999px;height:0.8px;background:#e1e3e6"></div>
<div style="left:967.2px;top:524.4px;width:0.7px;height:9.2px;background:#e3e3e3"></div>
<div style="left:978.7px;top:524.4px;width:0.7px;height:9.2px;background:#e3e3e3"></div>
<div style="left:989.6px;top:60.6px;width:0.8px;height:473px;background:#dadce0"></div>
<div style="left:990.4px;top:524.4px;width:8.3px;height:9.2px;background:#f8f9fa"></div>
<svg style="left:960px;top:495px" width="40" height="40" viewBox="960 495 40 40"><g fill="#8a8d91">
<path d="M992.4 509 L994.6 506.6 L996.8 509 Z"/>
<path d="M992.4 517.7 L994.6 520.1 L996.8 517.7 Z"/>
<path d="M974.6 526.6 L972.2 528.9 L974.6 531.2 Z"/>
<path d="M983.4 526.6 L985.8 528.9 L983.4 531.2 Z"/>
</g></svg>

<!-- bottom bar -->
<div style="left:0;top:533.8px;width:1000px;height:0.7px;background:#dadce0"></div>
<div style="left:0;top:534.1px;width:1000px;height:27px;background:#f9fbfd"></div>
<div style="left:0;top:533.3px;width:999px;height:0.8px;background:#dadce0"></div>
<div style="left:97.8px;top:534.2px;width:72.4px;height:27px;background:#e1e9f7"></div>
<svg style="left:0;top:534px" width="200" height="27" viewBox="0 534 200 27">
<g fill="none" stroke="#444746" stroke-width="1.25">
<path d="M41.7 548.4 H49.3 M45.5 544.6 V552.2"/>
<path d="M69.3 545.2 H79.8 M69.3 548.4 H79.8 M69.3 551.6 H79.8"/>
</g>
<path d="M156 547.3 H161.8 L158.9 550.2 Z" fill="#0b57d0"/>
<text x="106.5" y="552.4" font-family="'Liberation Sans', sans-serif" font-size="10.8" letter-spacing="0.45" stroke="#0b57d0" stroke-width="0.45" fill="#0b57d0">Arkusz1</text>
</svg>

<div style="left:998px;top:0;width:2px;height:561px;background:#fff"></div>
</div></body></html>
